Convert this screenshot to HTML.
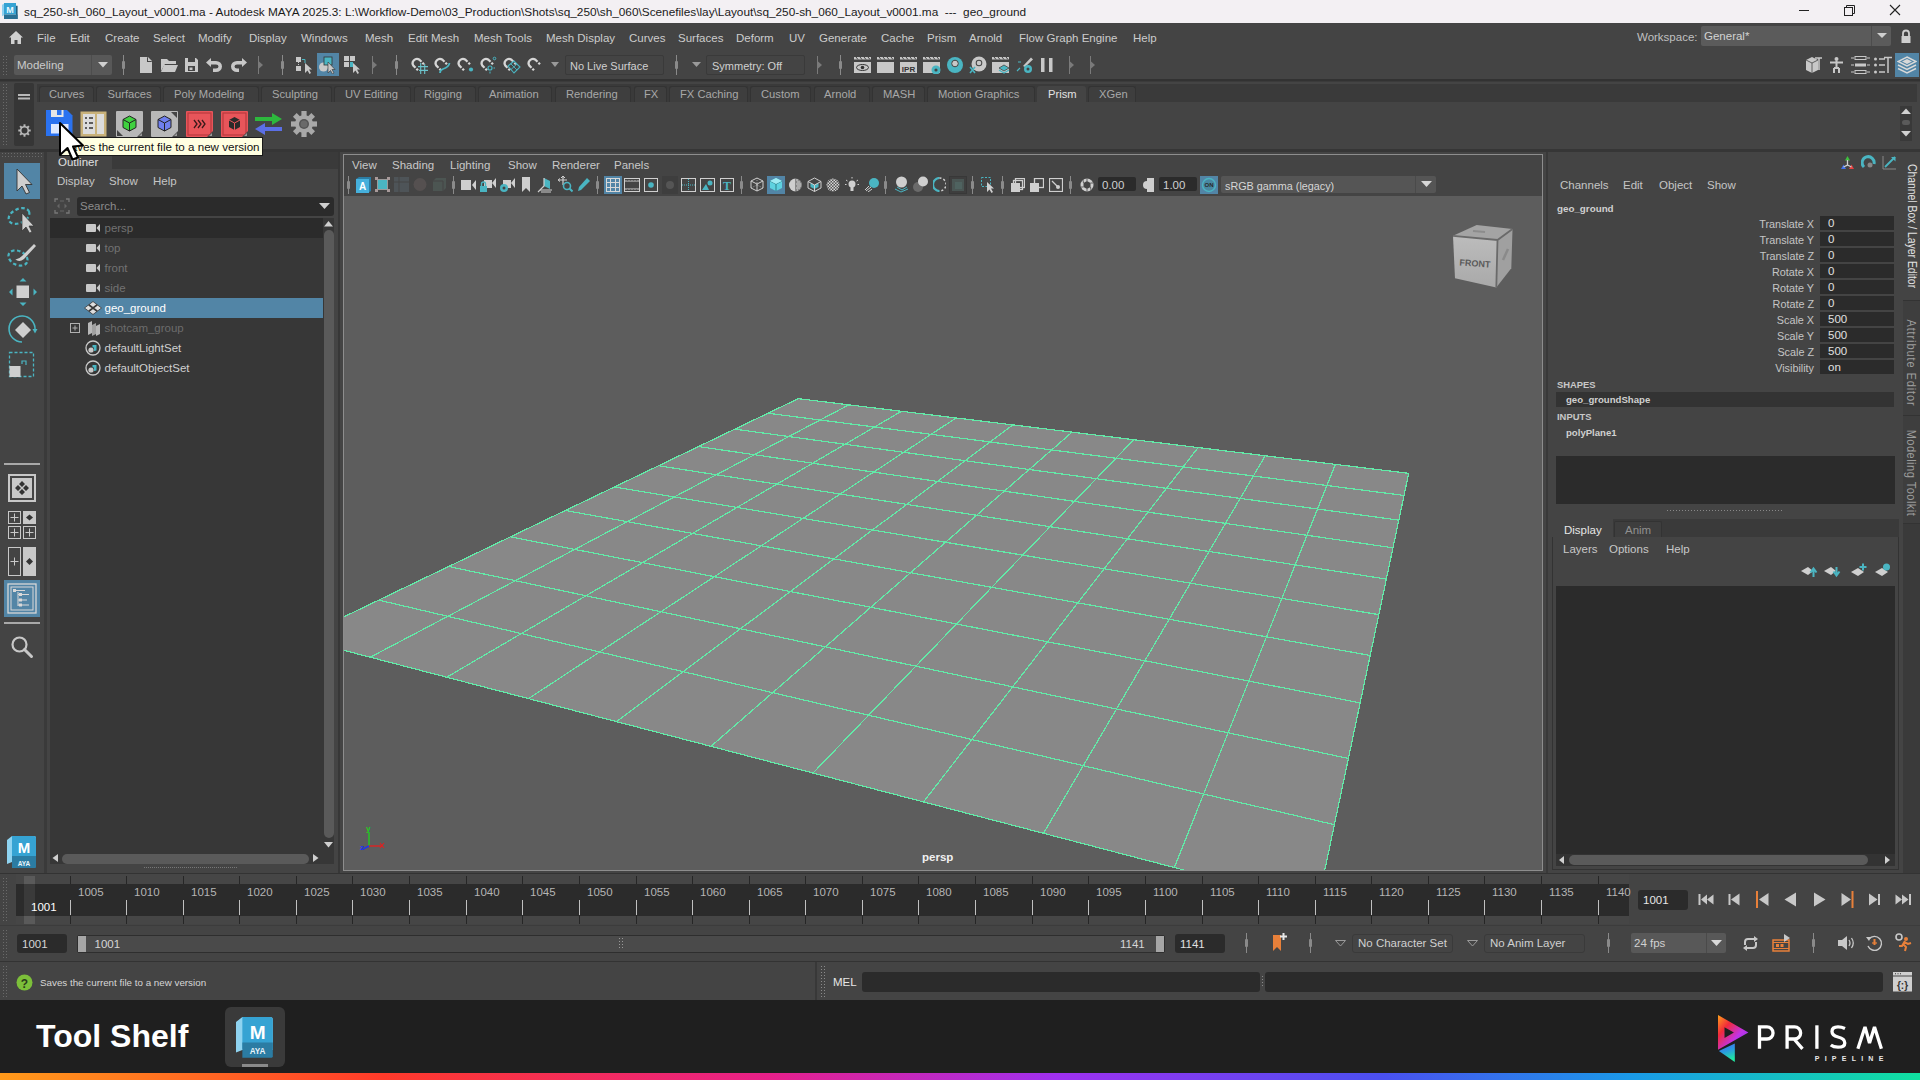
<!DOCTYPE html><html><head><meta charset="utf-8"><style>
html,body{margin:0;padding:0;width:1920px;height:1080px;overflow:hidden;background:#444;}
body{position:relative;font-family:"Liberation Sans",sans-serif;}
div{position:absolute;}
.t{white-space:nowrap;}
</style></head><body>
<div style="left:0px;top:0px;width:1920px;height:23px;background:#f3f0f3;"></div>
<svg style="position:absolute;left:2px;top:3px;" width="16" height="16" viewBox="0 0 16 16"><path d="M0 1.8 L2.5 0.5 V12 L0 13.2Z" fill="#8fd0ef"/><rect x="2" y="0" width="12" height="11.5" fill="#36a3d3"/><path d="M14 2.8 H15.6 V16 H14Z" fill="#1f5f80"/><rect x="2" y="11.5" width="13.6" height="4.5" fill="#2a6f93"/><text x="8" y="9.6" font-family="Liberation Sans" font-weight="700" font-size="9" fill="#e8f8ff" text-anchor="middle">M</text></svg>
<div class="t" style="left:24px;top:4.5px;line-height:15px;font-size:11.8px;color:#1a1a1a;font-weight:400;font-family:'Liberation Sans',sans-serif;">sq_250-sh_060_Layout_v0001.ma - Autodesk MAYA 2025.3: L:\Workflow-Demo\03_Production\Shots\sq_250\sh_060\Scenefiles\lay\Layout\sq_250-sh_060_Layout_v0001.ma  ---  geo_ground</div>
<svg style="position:absolute;left:1795px;top:3px;" width="120" height="16" viewBox="0 0 120 16"><line x1="4" y1="7.5" x2="14" y2="7.5" stroke="#222" stroke-width="1"/><rect x="49.5" y="4.5" width="8" height="8" fill="none" stroke="#222"/><path d="M51.5 4.5 V2.5 H59.5 V10.5 H57.5" fill="none" stroke="#222"/><path d="M95 2 L105 12 M105 2 L95 12" stroke="#222" stroke-width="1.1"/></svg>
<div style="left:0px;top:23px;width:1920px;height:29px;background:#444444;"></div>
<svg style="position:absolute;left:8px;top:30px;" width="16" height="15" viewBox="0 0 16 15"><path d="M8 1 L15 7.5 L13 7.5 L13 14 L9.5 14 L9.5 10 L6.5 10 L6.5 14 L3 14 L3 7.5 L1 7.5Z" fill="#d0d0d0"/></svg>
<div class="t" style="left:37px;top:30.5px;line-height:15px;font-size:11.5px;color:#cccccc;font-weight:400;font-family:'Liberation Sans',sans-serif;">File</div>
<div class="t" style="left:70px;top:30.5px;line-height:15px;font-size:11.5px;color:#cccccc;font-weight:400;font-family:'Liberation Sans',sans-serif;">Edit</div>
<div class="t" style="left:105px;top:30.5px;line-height:15px;font-size:11.5px;color:#cccccc;font-weight:400;font-family:'Liberation Sans',sans-serif;">Create</div>
<div class="t" style="left:153px;top:30.5px;line-height:15px;font-size:11.5px;color:#cccccc;font-weight:400;font-family:'Liberation Sans',sans-serif;">Select</div>
<div class="t" style="left:198px;top:30.5px;line-height:15px;font-size:11.5px;color:#cccccc;font-weight:400;font-family:'Liberation Sans',sans-serif;">Modify</div>
<div class="t" style="left:249px;top:30.5px;line-height:15px;font-size:11.5px;color:#cccccc;font-weight:400;font-family:'Liberation Sans',sans-serif;">Display</div>
<div class="t" style="left:301px;top:30.5px;line-height:15px;font-size:11.5px;color:#cccccc;font-weight:400;font-family:'Liberation Sans',sans-serif;">Windows</div>
<div class="t" style="left:365px;top:30.5px;line-height:15px;font-size:11.5px;color:#cccccc;font-weight:400;font-family:'Liberation Sans',sans-serif;">Mesh</div>
<div class="t" style="left:408px;top:30.5px;line-height:15px;font-size:11.5px;color:#cccccc;font-weight:400;font-family:'Liberation Sans',sans-serif;">Edit Mesh</div>
<div class="t" style="left:474px;top:30.5px;line-height:15px;font-size:11.5px;color:#cccccc;font-weight:400;font-family:'Liberation Sans',sans-serif;">Mesh Tools</div>
<div class="t" style="left:546px;top:30.5px;line-height:15px;font-size:11.5px;color:#cccccc;font-weight:400;font-family:'Liberation Sans',sans-serif;">Mesh Display</div>
<div class="t" style="left:629px;top:30.5px;line-height:15px;font-size:11.5px;color:#cccccc;font-weight:400;font-family:'Liberation Sans',sans-serif;">Curves</div>
<div class="t" style="left:678px;top:30.5px;line-height:15px;font-size:11.5px;color:#cccccc;font-weight:400;font-family:'Liberation Sans',sans-serif;">Surfaces</div>
<div class="t" style="left:736px;top:30.5px;line-height:15px;font-size:11.5px;color:#cccccc;font-weight:400;font-family:'Liberation Sans',sans-serif;">Deform</div>
<div class="t" style="left:789px;top:30.5px;line-height:15px;font-size:11.5px;color:#cccccc;font-weight:400;font-family:'Liberation Sans',sans-serif;">UV</div>
<div class="t" style="left:819px;top:30.5px;line-height:15px;font-size:11.5px;color:#cccccc;font-weight:400;font-family:'Liberation Sans',sans-serif;">Generate</div>
<div class="t" style="left:881px;top:30.5px;line-height:15px;font-size:11.5px;color:#cccccc;font-weight:400;font-family:'Liberation Sans',sans-serif;">Cache</div>
<div class="t" style="left:927px;top:30.5px;line-height:15px;font-size:11.5px;color:#cccccc;font-weight:400;font-family:'Liberation Sans',sans-serif;">Prism</div>
<div class="t" style="left:969px;top:30.5px;line-height:15px;font-size:11.5px;color:#cccccc;font-weight:400;font-family:'Liberation Sans',sans-serif;">Arnold</div>
<div class="t" style="left:1019px;top:30.5px;line-height:15px;font-size:11.5px;color:#cccccc;font-weight:400;font-family:'Liberation Sans',sans-serif;">Flow Graph Engine</div>
<div class="t" style="left:1133px;top:30.5px;line-height:15px;font-size:11.5px;color:#cccccc;font-weight:400;font-family:'Liberation Sans',sans-serif;">Help</div>
<div class="t" style="left:1637px;top:29.5px;line-height:15px;font-size:11.5px;color:#c0c0c0;font-weight:400;font-family:'Liberation Sans',sans-serif;">Workspace:</div>
<div style="left:1701px;top:26px;width:190px;height:20px;background:#5b5b5b;border-radius:2px"></div>
<div style="left:1871px;top:26px;width:1px;height:20px;background:#4c4c4c;"></div>
<svg style="position:absolute;left:1876px;top:32px;" width="12" height="8" viewBox="0 0 12 8"><path d="M1 1 L11 1 L6 6Z" fill="#cfcfcf"/></svg>
<div class="t" style="left:1704px;top:29.0px;line-height:15px;font-size:11.5px;color:#d2d2d2;font-weight:400;font-family:'Liberation Sans',sans-serif;">General*</div>
<svg style="position:absolute;left:1899px;top:28px;" width="14" height="16" viewBox="0 0 14 16"><path d="M4 8 V5.5 A3 3 0 0 1 10 5.5 V8" fill="none" stroke="#cfcfcf" stroke-width="1.8"/><rect x="2.5" y="8" width="9" height="7" fill="#cfcfcf"/></svg>
<div style="left:0px;top:52px;width:1920px;height:28px;background:#444444;"></div>
<div style="left:0px;top:79px;width:1920px;height:2px;background:#323232;"></div>
<div style="left:0px;top:81px;width:1920px;height:1px;background:#3b3b3b;"></div>
<svg style="position:absolute;left:3px;top:56px;" width="5" height="20" viewBox="0 0 5 20"><rect x="0" y="0" width="1" height="1" fill="#6a6a6a"/><rect x="0" y="3" width="1" height="1" fill="#6a6a6a"/><rect x="0" y="6" width="1" height="1" fill="#6a6a6a"/><rect x="0" y="9" width="1" height="1" fill="#6a6a6a"/><rect x="0" y="12" width="1" height="1" fill="#6a6a6a"/><rect x="0" y="15" width="1" height="1" fill="#6a6a6a"/><rect x="0" y="18" width="1" height="1" fill="#6a6a6a"/><rect x="3" y="0" width="1" height="1" fill="#6a6a6a"/><rect x="3" y="3" width="1" height="1" fill="#6a6a6a"/><rect x="3" y="6" width="1" height="1" fill="#6a6a6a"/><rect x="3" y="9" width="1" height="1" fill="#6a6a6a"/><rect x="3" y="12" width="1" height="1" fill="#6a6a6a"/><rect x="3" y="15" width="1" height="1" fill="#6a6a6a"/><rect x="3" y="18" width="1" height="1" fill="#6a6a6a"/></svg>
<div style="left:14px;top:55px;width:98px;height:20px;background:#585858;border-radius:2px"></div>
<div style="left:91px;top:55px;width:1px;height:20px;background:#4d4d4d;"></div>
<div class="t" style="left:17px;top:58.0px;line-height:15px;font-size:11.5px;color:#cbcbcb;font-weight:400;font-family:'Liberation Sans',sans-serif;">Modeling</div>
<svg style="position:absolute;left:97px;top:61px;" width="12" height="8" viewBox="0 0 12 8"><path d="M1 1 L11 1 L6 6.5Z" fill="#d0d0d0"/></svg>
<svg style="position:absolute;left:121px;top:55px;" width="5" height="20" viewBox="0 0 5 20"><rect x="2" y="0" width="1" height="20" fill="#8a8a8a"/><rect x="1" y="6.0" width="3" height="8.0" fill="#8a8a8a" rx="1"/></svg>
<svg style="position:absolute;left:139px;top:57px;" width="14" height="16" viewBox="0 0 14 16"><path d="M1 0 H8 L13 5 V16 H1Z" fill="#c8c8c8"/><path d="M8 0 V5 H13" fill="#444"/><path d="M9 0 L13 4 H9Z" fill="#c8c8c8"/></svg>
<svg style="position:absolute;left:160px;top:57px;" width="19" height="16" viewBox="0 0 19 16"><path d="M1 2 H7 L9 4 H16 V7 H5 L1 14Z" fill="#c8c8c8"/><path d="M4 8 H18 L15 15 H1Z" fill="#c8c8c8"/></svg>
<svg style="position:absolute;left:184px;top:57px;" width="15" height="16" viewBox="0 0 15 16"><path d="M1 1 H12 L14 3 V15 H1Z" fill="#c8c8c8"/><rect x="4" y="1" width="7" height="4" fill="#444"/><rect x="4" y="9" width="7" height="5" fill="#444"/><rect x="5.5" y="10.5" width="3" height="2.5" fill="#c8c8c8"/></svg>
<svg style="position:absolute;left:205px;top:57px;" width="19" height="16" viewBox="0 0 19 16"><path d="M1 5.5 L6 1 V4 H11 A6 5.5 0 0 1 11 15 H8 V11.5 H11 A2.5 2 0 0 0 11 7.5 H6 V10Z" fill="#c8c8c8"/></svg>
<svg style="position:absolute;left:229px;top:57px;" width="19" height="16" viewBox="0 0 19 16"><path d="M18 5.5 L13 1 V4 H8 A6 5.5 0 0 0 8 15 H10 V11.5 H8 A2.5 2 0 0 1 8 7.5 H13 V10Z" fill="#c8c8c8"/></svg>
<svg style="position:absolute;left:258px;top:56px;" width="6" height="18" viewBox="0 0 6 18"><rect x="0" y="0" width="1" height="18" fill="#7a7a7a"/><path d="M0.5 5.0 L5 9.0 L0.5 13.0Z" fill="#7a7a7a"/></svg>
<svg style="position:absolute;left:280px;top:55px;" width="5" height="20" viewBox="0 0 5 20"><rect x="2" y="0" width="1" height="20" fill="#8a8a8a"/><rect x="1" y="6.0" width="3" height="8.0" fill="#8a8a8a" rx="1"/></svg>
<svg style="position:absolute;left:296px;top:56px;" width="17" height="18" viewBox="0 0 17 18"><rect x="0" y="1" width="5" height="5" fill="#c8c8c8"/><rect x="0" y="10" width="5" height="5" fill="#c8c8c8"/><path d="M2.5 6 V10" stroke="#c8c8c8" stroke-dasharray="1 1"/><path d="M6 3.5 H9 V7" fill="none" stroke="#4ab5c2" stroke-width="1"/><path d="M9 7 L9 17 L11.5 14.5 L13.5 18 L15 17 L13 13.5 L16 13.5Z" fill="#c8c8c8"/></svg>
<div style="left:317px;top:53px;width:22px;height:23px;background:#5285a6;"></div>
<svg style="position:absolute;left:318px;top:56px;" width="20" height="18" viewBox="0 0 20 18"><circle cx="5.5" cy="11" r="4.5" fill="#c8c8c8"/><rect x="6" y="1" width="8" height="8" fill="#4ab5c2" stroke="#333" stroke-width="0.8"/><path d="M10 6 L10 17 L12.5 14.5 L14.5 18 L16 17 L14 13.5 L17 13.5Z" fill="#c8c8c8" stroke="#333" stroke-width="0.6"/></svg>
<svg style="position:absolute;left:344px;top:56px;" width="17" height="18" viewBox="0 0 17 18"><rect x="0" y="0" width="5" height="5" fill="#c8c8c8"/><rect x="6" y="0" width="5" height="5" fill="#c8c8c8"/><rect x="0" y="6" width="5" height="5" fill="#c8c8c8"/><rect x="6" y="6" width="3" height="5" fill="#4ab5c2"/><path d="M9 7 L9 17 L11.5 14.5 L13.5 18 L15 17 L13 13.5 L16 13.5Z" fill="#c8c8c8"/></svg>
<svg style="position:absolute;left:372px;top:56px;" width="6" height="18" viewBox="0 0 6 18"><rect x="0" y="0" width="1" height="18" fill="#7a7a7a"/><path d="M0.5 5.0 L5 9.0 L0.5 13.0Z" fill="#7a7a7a"/></svg>
<svg style="position:absolute;left:394px;top:55px;" width="5" height="20" viewBox="0 0 5 20"><rect x="2" y="0" width="1" height="20" fill="#8a8a8a"/><rect x="1" y="6.0" width="3" height="8.0" fill="#8a8a8a" rx="1"/></svg>
<svg style="position:absolute;left:410px;top:56px;" width="20" height="18" viewBox="0 0 20 18"><path d="M5.5 11.8 L3.5 9.8 A4.3 4.3 0 0 1 9.5 3.8 L11.5 5.8" fill="none" stroke="#d6d6d6" stroke-width="2.3"/><path d="M7.2 11.9 L8.8 13.5 L7.2 15.1 L5.6 13.5Z M13.2 5.9 L14.8 7.5 L13.2 9.1 L11.6 7.5Z" fill="#d6d6d6"/><path d="M8 10.6 H18 M9 14.4 H18 M10.7 7 V18 M14.7 8 V18" stroke="#6cc4cc" stroke-width="1.1"/></svg>
<svg style="position:absolute;left:433px;top:56px;" width="20" height="18" viewBox="0 0 20 18"><path d="M5.5 11.8 L3.5 9.8 A4.3 4.3 0 0 1 9.5 3.8 L11.5 5.8" fill="none" stroke="#d6d6d6" stroke-width="2.3"/><path d="M7.2 11.9 L8.8 13.5 L7.2 15.1 L5.6 13.5Z M13.2 5.9 L14.8 7.5 L13.2 9.1 L11.6 7.5Z" fill="#d6d6d6"/><path d="M7 17 Q7 14 10 13 Q16 11 16.5 7" fill="none" stroke="#4ab5c2" stroke-width="1.8"/></svg>
<svg style="position:absolute;left:456px;top:56px;" width="20" height="18" viewBox="0 0 20 18"><path d="M5.5 11.8 L3.5 9.8 A4.3 4.3 0 0 1 9.5 3.8 L11.5 5.8" fill="none" stroke="#d6d6d6" stroke-width="2.3"/><path d="M7.2 11.9 L8.8 13.5 L7.2 15.1 L5.6 13.5Z M13.2 5.9 L14.8 7.5 L13.2 9.1 L11.6 7.5Z" fill="#d6d6d6"/><circle cx="15" cy="13.5" r="2.1" fill="#4ab5c2"/></svg>
<svg style="position:absolute;left:479px;top:56px;" width="20" height="18" viewBox="0 0 20 18"><path d="M5.5 11.8 L3.5 9.8 A4.3 4.3 0 0 1 9.5 3.8 L11.5 5.8" fill="none" stroke="#d6d6d6" stroke-width="2.3"/><path d="M7.2 11.9 L8.8 13.5 L7.2 15.1 L5.6 13.5Z M13.2 5.9 L14.8 7.5 L13.2 9.1 L11.6 7.5Z" fill="#d6d6d6"/><circle cx="11" cy="12" r="2" fill="none" stroke="#4ab5c2" stroke-width="1.2"/><circle cx="15.5" cy="2.5" r="1.3" fill="none" stroke="#4ab5c2"/><path d="M11 15.5 V17.5 M14.5 12 H16" stroke="#4ab5c2"/></svg>
<svg style="position:absolute;left:502px;top:56px;" width="20" height="18" viewBox="0 0 20 18"><path d="M5.5 11.8 L3.5 9.8 A4.3 4.3 0 0 1 9.5 3.8 L11.5 5.8" fill="none" stroke="#d6d6d6" stroke-width="2.3"/><path d="M7.2 11.9 L8.8 13.5 L7.2 15.1 L5.6 13.5Z M13.2 5.9 L14.8 7.5 L13.2 9.1 L11.6 7.5Z" fill="#d6d6d6"/><path d="M6 10 L12 5 L18 11 L12 17Z" fill="none" stroke="#4ab5c2" stroke-width="1.1"/><path d="M9 8 L15 14 M9 13.5 L15 8" stroke="#4ab5c2" stroke-width="0.9"/></svg>
<svg style="position:absolute;left:526px;top:56px;" width="20" height="18" viewBox="0 0 20 18"><path d="M5.5 11.8 L3.5 9.8 A4.3 4.3 0 0 1 9.5 3.8 L11.5 5.8" fill="none" stroke="#d6d6d6" stroke-width="2.3"/><path d="M7.2 11.9 L8.8 13.5 L7.2 15.1 L5.6 13.5Z M13.2 5.9 L14.8 7.5 L13.2 9.1 L11.6 7.5Z" fill="#d6d6d6"/></svg>
<svg style="position:absolute;left:551px;top:62px;" width="8" height="6" viewBox="0 0 8 6"><path d="M0 0 H8 L4 5Z" fill="#9a9a9a"/></svg>
<div style="left:565px;top:55px;width:99px;height:20px;background:#444;border:1px solid #3a3a3a;box-sizing:border-box;border-radius:2px"></div>
<div class="t" style="left:570px;top:58.5px;line-height:14px;font-size:11px;color:#d0d0d0;font-weight:400;font-family:'Liberation Sans',sans-serif;">No Live Surface</div>
<svg style="position:absolute;left:674px;top:55px;" width="5" height="20" viewBox="0 0 5 20"><rect x="2" y="0" width="1" height="20" fill="#8a8a8a"/><rect x="1" y="6.0" width="3" height="8.0" fill="#8a8a8a" rx="1"/></svg>
<svg style="position:absolute;left:692px;top:62px;" width="9" height="6" viewBox="0 0 9 6"><path d="M0 0 H9 L4.5 5Z" fill="#9a9a9a"/></svg>
<div style="left:706px;top:55px;width:99px;height:20px;background:#444;border:1px solid #3a3a3a;box-sizing:border-box;border-radius:2px"></div>
<div class="t" style="left:712px;top:58.5px;line-height:14px;font-size:11px;color:#d0d0d0;font-weight:400;font-family:'Liberation Sans',sans-serif;">Symmetry: Off</div>
<svg style="position:absolute;left:817px;top:56px;" width="6" height="18" viewBox="0 0 6 18"><rect x="0" y="0" width="1" height="18" fill="#7a7a7a"/><path d="M0.5 5.0 L5 9.0 L0.5 13.0Z" fill="#7a7a7a"/></svg>
<svg style="position:absolute;left:838px;top:55px;" width="5" height="20" viewBox="0 0 5 20"><rect x="2" y="0" width="1" height="20" fill="#8a8a8a"/><rect x="1" y="6.0" width="3" height="8.0" fill="#8a8a8a" rx="1"/></svg>
<svg style="position:absolute;left:854px;top:56px;" width="18" height="18" viewBox="0 0 18 18"><path d="M0 1 H17 V3.5 H0Z" fill="#c8c8c8"/><path d="M2 1 L4 3.5 M6 1 L8 3.5 M10 1 L12 3.5 M14 1 L16 3.5" stroke="#444" stroke-width="1"/><rect x="0" y="6" width="17" height="11" fill="#c8c8c8"/><ellipse cx="8.5" cy="11.5" rx="6" ry="3" fill="none" stroke="#333" stroke-width="1"/><circle cx="8.5" cy="11.5" r="1.8" fill="#333"/></svg>
<svg style="position:absolute;left:877px;top:56px;" width="18" height="18" viewBox="0 0 18 18"><path d="M0 1 H17 V3.5 H0Z" fill="#c8c8c8"/><path d="M2 1 L4 3.5 M6 1 L8 3.5 M10 1 L12 3.5 M14 1 L16 3.5" stroke="#444" stroke-width="1"/><rect x="0" y="6" width="17" height="11" fill="#c8c8c8"/></svg>
<svg style="position:absolute;left:900px;top:56px;" width="18" height="18" viewBox="0 0 18 18"><path d="M0 1 H17 V3.5 H0Z" fill="#c8c8c8"/><path d="M2 1 L4 3.5 M6 1 L8 3.5 M10 1 L12 3.5 M14 1 L16 3.5" stroke="#444" stroke-width="1"/><rect x="0" y="6" width="17" height="11" fill="#c8c8c8"/><text x="8.5" y="15.5" font-family="Liberation Sans" font-size="8" font-weight="700" fill="#333" text-anchor="middle">IPR</text></svg>
<svg style="position:absolute;left:923px;top:56px;" width="18" height="18" viewBox="0 0 18 18"><path d="M0 1 H17 V3.5 H0Z" fill="#c8c8c8"/><path d="M2 1 L4 3.5 M6 1 L8 3.5 M10 1 L12 3.5 M14 1 L16 3.5" stroke="#444" stroke-width="1"/><rect x="0" y="6" width="17" height="11" fill="#c8c8c8"/><circle cx="13" cy="14" r="4.5" fill="#4ab5c2"/><circle cx="13" cy="14" r="1.6" fill="#444"/></svg>
<svg style="position:absolute;left:946px;top:56px;" width="18" height="18" viewBox="0 0 18 18"><circle cx="9" cy="9" r="8" fill="#4ab5c2"/><circle cx="9" cy="7.5" r="3.3" fill="#c8c8c8" stroke="#444" stroke-width="1"/></svg>
<svg style="position:absolute;left:969px;top:56px;" width="18" height="18" viewBox="0 0 18 18"><circle cx="10" cy="8" r="7.5" fill="#c8c8c8"/><circle cx="10" cy="7" r="3.3" fill="#444"/><circle cx="10" cy="7" r="2.3" fill="#c8c8c8"/><path d="M1 11 L6 17 M6 11 L1 17" stroke="#4ab5c2" stroke-width="1.6"/></svg>
<svg style="position:absolute;left:992px;top:56px;" width="18" height="18" viewBox="0 0 18 18"><path d="M0 1 H17 V3.5 H0Z" fill="#c8c8c8"/><path d="M2 1 L4 3.5 M6 1 L8 3.5 M10 1 L12 3.5 M14 1 L16 3.5" stroke="#444" stroke-width="1"/><rect x="0" y="6" width="17" height="11" fill="#c8c8c8"/><path d="M12 9 L17 12 L12 15 L7 12Z" fill="#4ab5c2" stroke="#444" stroke-width="0.8"/><path d="M7 14 L12 17 L17 14" fill="none" stroke="#4ab5c2" stroke-width="1.4"/></svg>
<svg style="position:absolute;left:1015px;top:56px;" width="20" height="18" viewBox="0 0 20 18"><path d="M8 10 L16 1.5 L18 3.5 L10 11Z" fill="#c8c8c8"/><path d="M3 6 H6 M2 15 L5 12" stroke="#4ab5c2" stroke-width="1.2"/><circle cx="13" cy="13" r="4" fill="#4ab5c2"/><circle cx="13" cy="13" r="1.5" fill="#444"/></svg>
<svg style="position:absolute;left:1041px;top:58px;" width="12" height="14" viewBox="0 0 12 14"><rect x="0" y="0" width="3.5" height="14" fill="#c8c8c8"/><rect x="8" y="0" width="3.5" height="14" fill="#c8c8c8"/></svg>
<svg style="position:absolute;left:1069px;top:56px;" width="6" height="18" viewBox="0 0 6 18"><rect x="0" y="0" width="1" height="18" fill="#7a7a7a"/><path d="M0.5 5.0 L5 9.0 L0.5 13.0Z" fill="#7a7a7a"/></svg>
<svg style="position:absolute;left:1090px;top:56px;" width="6" height="18" viewBox="0 0 6 18"><rect x="0" y="0" width="1" height="18" fill="#7a7a7a"/><path d="M0.5 5.0 L5 9.0 L0.5 13.0Z" fill="#7a7a7a"/></svg>
<svg style="position:absolute;left:1804px;top:56px;" width="19" height="18" viewBox="0 0 19 18"><path d="M2 4 L8 1 L14 4 V14 L8 17 L2 14Z" fill="#c8c8c8"/><path d="M8 7 V17 M2 4 L8 7 L14 4" stroke="#444" stroke-width="0.8" fill="none"/><path d="M11 2 H18 M15 2 V14" stroke="#c8c8c8" stroke-width="1.6"/></svg>
<svg style="position:absolute;left:1827px;top:56px;" width="19" height="18" viewBox="0 0 19 18"><circle cx="9.5" cy="3" r="2" fill="#c8c8c8"/><path d="M3 6.5 H16 M9.5 5 V12 M7 12 V17 M12 12 V17 M7 12 H12" stroke="#c8c8c8" stroke-width="2"/></svg>
<svg style="position:absolute;left:1851px;top:56px;" width="19" height="18" viewBox="0 0 19 18"><path d="M0 2 H3 M0 9 H3 M0 16 H3 M16 2 H19 M16 9 H19 M16 16 H19" stroke="#c8c8c8" stroke-width="1.2"/><rect x="4" y="0.5" width="11" height="3" fill="none" stroke="#c8c8c8"/><rect x="4" y="7.5" width="11" height="3" fill="#c8c8c8"/><rect x="4" y="14.5" width="11" height="3" fill="none" stroke="#c8c8c8"/></svg>
<svg style="position:absolute;left:1874px;top:56px;" width="19" height="18" viewBox="0 0 19 18"><circle cx="1.5" cy="3" r="1.5" fill="#c8c8c8"/><circle cx="1.5" cy="9" r="1.5" fill="#c8c8c8"/><circle cx="1.5" cy="16" r="1.5" fill="#c8c8c8"/><path d="M5 3 H11 M5 9 H11 M5 16 H11 M10 1.5 H18 M14 1.5 V17" stroke="#c8c8c8" stroke-width="1.5"/></svg>
<div style="left:1895px;top:53px;width:24px;height:24px;background:#5285a6;"></div>
<svg style="position:absolute;left:1897px;top:56px;" width="20" height="19" viewBox="0 0 20 19"><path d="M10 1 L19 5.5 L10 10 L1 5.5Z" fill="none" stroke="#d8d8d8" stroke-width="1.4"/><path d="M1 9 L10 13.5 L19 9 M1 12.5 L10 17 L19 12.5" fill="none" stroke="#d8d8d8" stroke-width="1.4"/><path d="M5 5.5 L10 3 L15 5.5 L10 8Z" fill="#d8d8d8"/></svg>
<div style="left:0px;top:82px;width:1920px;height:66px;background:#444444;"></div>
<svg style="position:absolute;left:3px;top:84px;" width="5" height="62" viewBox="0 0 5 62"><rect x="0" y="0" width="1" height="1" fill="#6a6a6a"/><rect x="0" y="3" width="1" height="1" fill="#6a6a6a"/><rect x="0" y="6" width="1" height="1" fill="#6a6a6a"/><rect x="0" y="9" width="1" height="1" fill="#6a6a6a"/><rect x="0" y="12" width="1" height="1" fill="#6a6a6a"/><rect x="0" y="15" width="1" height="1" fill="#6a6a6a"/><rect x="0" y="18" width="1" height="1" fill="#6a6a6a"/><rect x="0" y="21" width="1" height="1" fill="#6a6a6a"/><rect x="0" y="24" width="1" height="1" fill="#6a6a6a"/><rect x="0" y="27" width="1" height="1" fill="#6a6a6a"/><rect x="0" y="30" width="1" height="1" fill="#6a6a6a"/><rect x="0" y="33" width="1" height="1" fill="#6a6a6a"/><rect x="0" y="36" width="1" height="1" fill="#6a6a6a"/><rect x="0" y="39" width="1" height="1" fill="#6a6a6a"/><rect x="0" y="42" width="1" height="1" fill="#6a6a6a"/><rect x="0" y="45" width="1" height="1" fill="#6a6a6a"/><rect x="0" y="48" width="1" height="1" fill="#6a6a6a"/><rect x="0" y="51" width="1" height="1" fill="#6a6a6a"/><rect x="0" y="54" width="1" height="1" fill="#6a6a6a"/><rect x="0" y="57" width="1" height="1" fill="#6a6a6a"/><rect x="0" y="60" width="1" height="1" fill="#6a6a6a"/><rect x="3" y="0" width="1" height="1" fill="#6a6a6a"/><rect x="3" y="3" width="1" height="1" fill="#6a6a6a"/><rect x="3" y="6" width="1" height="1" fill="#6a6a6a"/><rect x="3" y="9" width="1" height="1" fill="#6a6a6a"/><rect x="3" y="12" width="1" height="1" fill="#6a6a6a"/><rect x="3" y="15" width="1" height="1" fill="#6a6a6a"/><rect x="3" y="18" width="1" height="1" fill="#6a6a6a"/><rect x="3" y="21" width="1" height="1" fill="#6a6a6a"/><rect x="3" y="24" width="1" height="1" fill="#6a6a6a"/><rect x="3" y="27" width="1" height="1" fill="#6a6a6a"/><rect x="3" y="30" width="1" height="1" fill="#6a6a6a"/><rect x="3" y="33" width="1" height="1" fill="#6a6a6a"/><rect x="3" y="36" width="1" height="1" fill="#6a6a6a"/><rect x="3" y="39" width="1" height="1" fill="#6a6a6a"/><rect x="3" y="42" width="1" height="1" fill="#6a6a6a"/><rect x="3" y="45" width="1" height="1" fill="#6a6a6a"/><rect x="3" y="48" width="1" height="1" fill="#6a6a6a"/><rect x="3" y="51" width="1" height="1" fill="#6a6a6a"/><rect x="3" y="54" width="1" height="1" fill="#6a6a6a"/><rect x="3" y="57" width="1" height="1" fill="#6a6a6a"/><rect x="3" y="60" width="1" height="1" fill="#6a6a6a"/></svg>
<div style="left:14px;top:83px;width:20px;height:63px;background:#363636;border-radius:2px"></div>
<svg style="position:absolute;left:17px;top:93px;" width="14" height="8" viewBox="0 0 14 8"><rect x="1" y="1" width="12" height="2" fill="#b8b8b8"/><rect x="1" y="4.5" width="12" height="2" fill="#b8b8b8"/></svg>
<svg style="position:absolute;left:18px;top:124px;" width="13" height="13" viewBox="0 0 13 13"><g transform="translate(6.5 6.5)"><circle r="3.8" fill="none" stroke="#b8b8b8" stroke-width="1.6"/><rect x="-1" y="-6.2" width="2" height="2.6" fill="#b8b8b8" transform="rotate(0)"/><rect x="-1" y="-6.2" width="2" height="2.6" fill="#b8b8b8" transform="rotate(45)"/><rect x="-1" y="-6.2" width="2" height="2.6" fill="#b8b8b8" transform="rotate(90)"/><rect x="-1" y="-6.2" width="2" height="2.6" fill="#b8b8b8" transform="rotate(135)"/><rect x="-1" y="-6.2" width="2" height="2.6" fill="#b8b8b8" transform="rotate(180)"/><rect x="-1" y="-6.2" width="2" height="2.6" fill="#b8b8b8" transform="rotate(225)"/><rect x="-1" y="-6.2" width="2" height="2.6" fill="#b8b8b8" transform="rotate(270)"/><rect x="-1" y="-6.2" width="2" height="2.6" fill="#b8b8b8" transform="rotate(315)"/></g></svg>
<div style="left:37px;top:84px;width:1880px;height:18px;background:#3a3a3a;"></div>
<div style="left:39px;top:86px;width:55px;height:16px;background:#3e3e3e;border:1px solid #333;border-bottom:none;box-sizing:border-box;border-radius:3px 3px 0 0"></div>
<div class="t" style="left:49px;top:87.3px;line-height:15px;font-size:11.2px;color:#a8a8a8;font-weight:400;font-family:'Liberation Sans',sans-serif;">Curves</div>
<div style="left:96px;top:86px;width:65px;height:16px;background:#3e3e3e;border:1px solid #333;border-bottom:none;box-sizing:border-box;border-radius:3px 3px 0 0"></div>
<div class="t" style="left:107.5px;top:87.3px;line-height:15px;font-size:11.2px;color:#a8a8a8;font-weight:400;font-family:'Liberation Sans',sans-serif;">Surfaces</div>
<div style="left:163px;top:86px;width:96px;height:16px;background:#3e3e3e;border:1px solid #333;border-bottom:none;box-sizing:border-box;border-radius:3px 3px 0 0"></div>
<div class="t" style="left:174px;top:87.3px;line-height:15px;font-size:11.2px;color:#a8a8a8;font-weight:400;font-family:'Liberation Sans',sans-serif;">Poly Modeling</div>
<div style="left:261px;top:86px;width:71px;height:16px;background:#3e3e3e;border:1px solid #333;border-bottom:none;box-sizing:border-box;border-radius:3px 3px 0 0"></div>
<div class="t" style="left:272px;top:87.3px;line-height:15px;font-size:11.2px;color:#a8a8a8;font-weight:400;font-family:'Liberation Sans',sans-serif;">Sculpting</div>
<div style="left:334px;top:86px;width:77px;height:16px;background:#3e3e3e;border:1px solid #333;border-bottom:none;box-sizing:border-box;border-radius:3px 3px 0 0"></div>
<div class="t" style="left:345px;top:87.3px;line-height:15px;font-size:11.2px;color:#a8a8a8;font-weight:400;font-family:'Liberation Sans',sans-serif;">UV Editing</div>
<div style="left:414px;top:86px;width:62px;height:16px;background:#3e3e3e;border:1px solid #333;border-bottom:none;box-sizing:border-box;border-radius:3px 3px 0 0"></div>
<div class="t" style="left:424px;top:87.3px;line-height:15px;font-size:11.2px;color:#a8a8a8;font-weight:400;font-family:'Liberation Sans',sans-serif;">Rigging</div>
<div style="left:478px;top:86px;width:74px;height:16px;background:#3e3e3e;border:1px solid #333;border-bottom:none;box-sizing:border-box;border-radius:3px 3px 0 0"></div>
<div class="t" style="left:489px;top:87.3px;line-height:15px;font-size:11.2px;color:#a8a8a8;font-weight:400;font-family:'Liberation Sans',sans-serif;">Animation</div>
<div style="left:555px;top:86px;width:76px;height:16px;background:#3e3e3e;border:1px solid #333;border-bottom:none;box-sizing:border-box;border-radius:3px 3px 0 0"></div>
<div class="t" style="left:566px;top:87.3px;line-height:15px;font-size:11.2px;color:#a8a8a8;font-weight:400;font-family:'Liberation Sans',sans-serif;">Rendering</div>
<div style="left:634px;top:86px;width:33px;height:16px;background:#3e3e3e;border:1px solid #333;border-bottom:none;box-sizing:border-box;border-radius:3px 3px 0 0"></div>
<div class="t" style="left:644px;top:87.3px;line-height:15px;font-size:11.2px;color:#a8a8a8;font-weight:400;font-family:'Liberation Sans',sans-serif;">FX</div>
<div style="left:669px;top:86px;width:79px;height:16px;background:#3e3e3e;border:1px solid #333;border-bottom:none;box-sizing:border-box;border-radius:3px 3px 0 0"></div>
<div class="t" style="left:680px;top:87.3px;line-height:15px;font-size:11.2px;color:#a8a8a8;font-weight:400;font-family:'Liberation Sans',sans-serif;">FX Caching</div>
<div style="left:750px;top:86px;width:61px;height:16px;background:#3e3e3e;border:1px solid #333;border-bottom:none;box-sizing:border-box;border-radius:3px 3px 0 0"></div>
<div class="t" style="left:761px;top:87.3px;line-height:15px;font-size:11.2px;color:#a8a8a8;font-weight:400;font-family:'Liberation Sans',sans-serif;">Custom</div>
<div style="left:814px;top:86px;width:56px;height:16px;background:#3e3e3e;border:1px solid #333;border-bottom:none;box-sizing:border-box;border-radius:3px 3px 0 0"></div>
<div class="t" style="left:824px;top:87.3px;line-height:15px;font-size:11.2px;color:#a8a8a8;font-weight:400;font-family:'Liberation Sans',sans-serif;">Arnold</div>
<div style="left:872px;top:86px;width:53px;height:16px;background:#3e3e3e;border:1px solid #333;border-bottom:none;box-sizing:border-box;border-radius:3px 3px 0 0"></div>
<div class="t" style="left:883px;top:87.3px;line-height:15px;font-size:11.2px;color:#a8a8a8;font-weight:400;font-family:'Liberation Sans',sans-serif;">MASH</div>
<div style="left:927px;top:86px;width:108px;height:16px;background:#3e3e3e;border:1px solid #333;border-bottom:none;box-sizing:border-box;border-radius:3px 3px 0 0"></div>
<div class="t" style="left:938px;top:87.3px;line-height:15px;font-size:11.2px;color:#a8a8a8;font-weight:400;font-family:'Liberation Sans',sans-serif;">Motion Graphics</div>
<div style="left:1037px;top:86px;width:49px;height:16px;background:#444;border-radius:3px 3px 0 0"></div>
<div class="t" style="left:1048px;top:87.3px;line-height:15px;font-size:11.2px;color:#e2e2e2;font-weight:400;font-family:'Liberation Sans',sans-serif;">Prism</div>
<div style="left:1088px;top:86px;width:48px;height:16px;background:#3e3e3e;border:1px solid #333;border-bottom:none;box-sizing:border-box;border-radius:3px 3px 0 0"></div>
<div class="t" style="left:1099px;top:87.3px;line-height:15px;font-size:11.2px;color:#a8a8a8;font-weight:400;font-family:'Liberation Sans',sans-serif;">XGen</div>
<div style="left:1900px;top:106px;width:12px;height:35px;background:#393939;"></div>
<svg style="position:absolute;left:1899px;top:107px;" width="14" height="32" viewBox="0 0 14 32"><path d="M2 7 L7 1.5 L12 7Z" fill="#cfcfcf"/><rect x="3" y="13" width="8" height="5" rx="2.5" fill="#5a5a5a"/><path d="M2 24 L7 29.5 L12 24Z" fill="#cfcfcf"/></svg>
<svg style="position:absolute;left:46px;top:110px;" width="27" height="27" viewBox="0 0 27 27"><path d="M0 0 H21 L26.5 5.5 V26 H0Z" fill="#2a72f0"/><rect x="5" y="0" width="12.5" height="7" fill="#e6e6e6"/><rect x="11" y="0" width="4.5" height="5" fill="#2a72f0"/><rect x="5" y="14" width="17.5" height="9.5" fill="#dde8ff"/></svg>
<svg style="position:absolute;left:80px;top:111px;" width="27" height="26" viewBox="0 0 27 26"><rect x="0.5" y="0.5" width="26" height="25" fill="#c9b27a"/><rect x="3" y="3" width="21" height="20" fill="#dcdcdc"/><rect x="15" y="3" width="2" height="20" fill="#c9b27a"/><path d="M5 7 H7 M9 7 H13 M5 12 H7 M9 12 H13 M5 17 H7 M9 17 H13" stroke="#333" stroke-width="1.5"/></svg>
<svg style="position:absolute;left:116px;top:111px;" width="27" height="26" viewBox="0 0 27 26"><rect x="0" y="0" width="27" height="26" rx="1" fill="#b8b8b8"/><path d="M13.5 5 L20 8.5 V16.5 L13.5 20 L7 16.5 V8.5Z" fill="#3fd13f" stroke="#222" stroke-width="1"/><path d="M7 8.5 L13.5 12 L20 8.5 M13.5 12 V20" fill="none" stroke="#222" stroke-width="1"/><path d="M1 19 L1 25 L7 25Z" fill="#444"/><path d="M27 20 L27 26 L21 26Z" fill="#444"/><path d="M26 22 L26 25 L23 25Z" fill="#9a9a9a"/></svg>
<svg style="position:absolute;left:151px;top:111px;" width="27" height="26" viewBox="0 0 27 26"><rect x="0" y="0" width="27" height="26" rx="1" fill="#b8b8b8"/><path d="M13.5 5 L20 8.5 V16.5 L13.5 20 L7 16.5 V8.5Z" fill="#6f7fee" stroke="#222" stroke-width="1"/><path d="M7 8.5 L13.5 12 L20 8.5 M13.5 12 V20" fill="none" stroke="#222" stroke-width="1"/><path d="M20 1 L26 1 L26 7Z" fill="#444"/><path d="M27 20 L27 26 L21 26Z" fill="#444"/><path d="M26 22 L26 25 L23 25Z" fill="#9a9a9a"/></svg>
<svg style="position:absolute;left:186px;top:111px;" width="27" height="26" viewBox="0 0 27 26"><rect x="0" y="0" width="27" height="26" rx="1" fill="#e8555a"/><rect x="2" y="2" width="23" height="22" fill="none" stroke="#b93a3e" stroke-width="1.2"/><path d="M8 9 L11 13 L8 17 M12 9 L15 13 L12 17 M16 9 L19 13 L16 17" fill="none" stroke="#3a1a1a" stroke-width="1.3"/><path d="M27 20 L27 26 L21 26Z" fill="#444"/><path d="M26 22 L26 25 L23 25Z" fill="#9a9a9a"/></svg>
<svg style="position:absolute;left:221px;top:111px;" width="27" height="26" viewBox="0 0 27 26"><rect x="0" y="0" width="27" height="26" rx="1" fill="#e8555a"/><rect x="2" y="2" width="23" height="22" fill="none" stroke="#b93a3e" stroke-width="1.2"/><path d="M13.5 6 L19 9 V16 L13.5 19 L8 16 V9Z" fill="#2a2a2a"/><path d="M8 9 L13.5 12 L19 9 M13.5 12 V19" fill="none" stroke="#e8555a" stroke-width="1"/><path d="M27 20 L27 26 L21 26Z" fill="#444"/><path d="M26 22 L26 25 L23 25Z" fill="#9a9a9a"/></svg>
<svg style="position:absolute;left:255px;top:113px;" width="27" height="22" viewBox="0 0 27 22"><path d="M0 4 H17 V0 L27 6 L17 12 V8 H0Z" fill="#2db83d"/><path d="M27 14 H10 V10 L0 16 L10 22 V18 H27Z" fill="#5b6fe6"/></svg>
<svg style="position:absolute;left:290px;top:110px;" width="28" height="28" viewBox="0 0 28 28"><g transform="translate(14 14)"><circle r="9" fill="#a8a8a8"/><rect x="-2.6" y="-13" width="5.2" height="6" fill="#a8a8a8" transform="rotate(0)"/><rect x="-2.6" y="-13" width="5.2" height="6" fill="#a8a8a8" transform="rotate(45)"/><rect x="-2.6" y="-13" width="5.2" height="6" fill="#a8a8a8" transform="rotate(90)"/><rect x="-2.6" y="-13" width="5.2" height="6" fill="#a8a8a8" transform="rotate(135)"/><rect x="-2.6" y="-13" width="5.2" height="6" fill="#a8a8a8" transform="rotate(180)"/><rect x="-2.6" y="-13" width="5.2" height="6" fill="#a8a8a8" transform="rotate(225)"/><rect x="-2.6" y="-13" width="5.2" height="6" fill="#a8a8a8" transform="rotate(270)"/><rect x="-2.6" y="-13" width="5.2" height="6" fill="#a8a8a8" transform="rotate(315)"/><circle r="5" fill="#555"/><circle r="3.5" fill="#6a6a6a"/></g></svg>
<div style="left:0px;top:149px;width:1920px;height:3px;background:#363636;"></div>
<div style="left:0px;top:152px;width:1920px;height:722px;background:#444444;"></div>
<svg style="position:absolute;left:2px;top:153px;" width="40" height="4" viewBox="0 0 40 4"><rect x="0" y="0" width="1" height="1" fill="#6a6a6a"/><rect x="0" y="3" width="1" height="1" fill="#6a6a6a"/><rect x="3" y="0" width="1" height="1" fill="#6a6a6a"/><rect x="3" y="3" width="1" height="1" fill="#6a6a6a"/><rect x="6" y="0" width="1" height="1" fill="#6a6a6a"/><rect x="6" y="3" width="1" height="1" fill="#6a6a6a"/><rect x="9" y="0" width="1" height="1" fill="#6a6a6a"/><rect x="9" y="3" width="1" height="1" fill="#6a6a6a"/><rect x="12" y="0" width="1" height="1" fill="#6a6a6a"/><rect x="12" y="3" width="1" height="1" fill="#6a6a6a"/><rect x="15" y="0" width="1" height="1" fill="#6a6a6a"/><rect x="15" y="3" width="1" height="1" fill="#6a6a6a"/><rect x="18" y="0" width="1" height="1" fill="#6a6a6a"/><rect x="18" y="3" width="1" height="1" fill="#6a6a6a"/><rect x="21" y="0" width="1" height="1" fill="#6a6a6a"/><rect x="21" y="3" width="1" height="1" fill="#6a6a6a"/><rect x="24" y="0" width="1" height="1" fill="#6a6a6a"/><rect x="24" y="3" width="1" height="1" fill="#6a6a6a"/><rect x="27" y="0" width="1" height="1" fill="#6a6a6a"/><rect x="27" y="3" width="1" height="1" fill="#6a6a6a"/><rect x="30" y="0" width="1" height="1" fill="#6a6a6a"/><rect x="30" y="3" width="1" height="1" fill="#6a6a6a"/><rect x="33" y="0" width="1" height="1" fill="#6a6a6a"/><rect x="33" y="3" width="1" height="1" fill="#6a6a6a"/><rect x="36" y="0" width="1" height="1" fill="#6a6a6a"/><rect x="36" y="3" width="1" height="1" fill="#6a6a6a"/><rect x="39" y="0" width="1" height="1" fill="#6a6a6a"/><rect x="39" y="3" width="1" height="1" fill="#6a6a6a"/></svg>
<div style="left:44px;top:152px;width:3px;height:722px;background:#3a3a3a;"></div>
<div style="left:4px;top:163px;width:36px;height:36px;background:#5285a6;"></div>
<svg style="position:absolute;left:4px;top:163px;" width="36" height="36" viewBox="0 0 36 36"><path d="M13 6 L13 28 L18 23 L22 31 L25.5 29.5 L21.5 21.5 L28 21.5Z" fill="#cfcfcf" stroke="#333" stroke-width="0.9"/></svg>
<svg style="position:absolute;left:6px;top:203px;" width="34" height="30" viewBox="0 0 34 30"><ellipse cx="13" cy="13" rx="11" ry="7" transform="rotate(-25 13 13)" fill="none" stroke="#4ab5c2" stroke-width="2.2" stroke-dasharray="3.5 2.5"/><path d="M16 10 L16 28 L20 24 L23.5 30 L26 29 L23 23 L28 23Z" fill="#cfcfcf" stroke="#333" stroke-width="0.7"/></svg>
<svg style="position:absolute;left:6px;top:240px;" width="34" height="30" viewBox="0 0 34 30"><ellipse cx="12" cy="18" rx="10" ry="7" transform="rotate(25 12 18)" fill="none" stroke="#4ab5c2" stroke-width="2.2" stroke-dasharray="3.5 2.5"/><path d="M28 4 L16 16 Q12 20 9 19 Q13 23 18 19 L30 6Z" fill="#cfcfcf"/></svg>
<svg style="position:absolute;left:8px;top:277px;" width="30" height="30" viewBox="0 0 30 30"><rect x="8.5" y="8.5" width="12.5" height="12.5" fill="#cfcfcf"/><path d="M15 1 L18.5 4.5 H11.5Z M15 29 L18.5 25.5 H11.5Z M1 15 L4.5 11.5 V18.5Z M29 15 L25.5 11.5 V18.5Z" fill="#4ab5c2"/></svg>
<svg style="position:absolute;left:6px;top:314px;" width="34" height="30" viewBox="0 0 34 30"><path d="M16 28 A13 13 0 1 1 29 16" fill="none" stroke="#4ab5c2" stroke-width="1.6"/><path d="M26.5 15 L31.5 15 L29 19.5Z" fill="#4ab5c2"/><path d="M17 8 L25 16 L17 24 L9 16Z" fill="#cfcfcf"/></svg>
<svg style="position:absolute;left:8px;top:351px;" width="28" height="28" viewBox="0 0 28 28"><rect x="1.5" y="1.5" width="24" height="24" fill="none" stroke="#4ab5c2" stroke-width="1.3" stroke-dasharray="3 2"/><rect x="1.5" y="15" width="11" height="11" fill="#cfcfcf"/><path d="M14 13 V10 H18 V14" fill="none" stroke="#4ab5c2" stroke-width="1.2"/></svg>
<div style="left:4px;top:463px;width:36px;height:2px;background:#a8a8a8;"></div>
<svg style="position:absolute;left:8px;top:474px;" width="28" height="28" viewBox="0 0 28 28"><rect x="1" y="1" width="26" height="26" fill="none" stroke="#c8c8c8" stroke-width="2"/><rect x="4" y="4" width="20" height="20" fill="#c8c8c8"/><path d="M14 7 L17 10 L14 13 L11 10Z M14 15 L17 18 L14 21 L11 18Z M10 11 L13 14 L10 17 L7 14Z M18 11 L21 14 L18 17 L15 14Z" fill="#333"/></svg>
<svg style="position:absolute;left:8px;top:511px;" width="28" height="28" viewBox="0 0 28 28"><rect x="0.5" y="0.5" width="12" height="12" fill="none" stroke="#c8c8c8"/><path d="M6.5 2.5 V10.5 M2.5 6.5 H10.5" stroke="#c8c8c8"/><rect x="15" y="0" width="13" height="13" fill="#c8c8c8"/><path d="M21.5 3.5 L25 6.5 L21.5 9.5 L18 6.5Z" fill="#333"/><rect x="0.5" y="15.5" width="12" height="12" fill="none" stroke="#c8c8c8"/><path d="M6.5 17.5 V25.5 M2.5 21.5 H10.5" stroke="#c8c8c8"/><rect x="15.5" y="15.5" width="12" height="12" fill="none" stroke="#c8c8c8"/><path d="M21.5 17.5 V25.5 M17.5 21.5 H25.5" stroke="#c8c8c8"/></svg>
<svg style="position:absolute;left:8px;top:547px;" width="28" height="29" viewBox="0 0 28 29"><rect x="0.5" y="0.5" width="12" height="28" fill="none" stroke="#c8c8c8"/><path d="M6.5 10.5 V18.5 M2.5 14.5 H10.5" stroke="#c8c8c8"/><rect x="15" y="0" width="13" height="29" fill="#c8c8c8"/><path d="M21.5 11 L25 14.5 L21.5 18 L18 14.5Z" fill="#333"/></svg>
<div style="left:4px;top:580px;width:36px;height:37px;background:#5285a6;"></div>
<svg style="position:absolute;left:7px;top:583px;" width="30" height="31" viewBox="0 0 30 31"><rect x="1" y="1" width="28" height="29" fill="none" stroke="#d8d8d8" stroke-width="1.3"/><rect x="4" y="4" width="22" height="23" fill="none" stroke="#d8d8d8" stroke-width="1"/><path d="M8 7.5 H18 M11 9 V23 M11 11.5 H22 M11 17 H20 M11 22 H22" stroke="#d8d8d8" stroke-width="1"/><rect x="6" y="6" width="3" height="3" fill="#d8d8d8"/><rect x="12" y="10" width="3" height="3" fill="#d8d8d8"/><rect x="12" y="15.5" width="3" height="3" fill="#d8d8d8"/><rect x="12" y="20.5" width="3" height="3" fill="#d8d8d8"/></svg>
<div style="left:4px;top:622px;width:36px;height:2px;background:#a8a8a8;"></div>
<svg style="position:absolute;left:10px;top:635px;" width="25" height="25" viewBox="0 0 25 25"><circle cx="9.5" cy="9.5" r="7" fill="none" stroke="#c8c8c8" stroke-width="2.2"/><path d="M14.5 14.5 L21.5 21.5" stroke="#c8c8c8" stroke-width="3" stroke-linecap="round"/></svg>
<svg style="position:absolute;left:7px;top:836px;" width="31" height="34" viewBox="0 0 31 34"><g transform="scale(1.0)"><path d="M0 4 L5 0 H27 Q29 0 29 2 V26 L5 26 L0 28Z" fill="#8fd3f0"/><path d="M5 0 H27 Q29 0 29 2 V25 H5Z" fill="#36a3d3"/><path d="M5 20 H29 V31 Q29 32 28 32 H5Z" fill="#2b7ca3"/><text x="17" y="17" font-family="Liberation Sans" font-weight="700" font-size="15" fill="#fff" text-anchor="middle">M</text><text x="17" y="29.5" font-family="Liberation Sans" font-weight="700" font-size="6.5" fill="#e8f4fa" text-anchor="middle">AYA</text></g></svg>
<div style="left:47px;top:152px;width:291px;height:722px;background:#444444;"></div>
<div style="left:112px;top:152px;width:226px;height:17px;background:#3a3a3a;"></div>
<div style="left:47px;top:152px;width:65px;height:18px;background:#444444;"></div>
<div class="t" style="left:58px;top:155.0px;line-height:15px;font-size:11.5px;color:#e0e0e0;font-weight:400;font-family:'Liberation Sans',sans-serif;">Outliner</div>
<div class="t" style="left:57px;top:173.5px;line-height:15px;font-size:11.5px;color:#c4c4c4;font-weight:400;font-family:'Liberation Sans',sans-serif;">Display</div>
<div class="t" style="left:109px;top:173.5px;line-height:15px;font-size:11.5px;color:#c4c4c4;font-weight:400;font-family:'Liberation Sans',sans-serif;">Show</div>
<div class="t" style="left:153px;top:173.5px;line-height:15px;font-size:11.5px;color:#c4c4c4;font-weight:400;font-family:'Liberation Sans',sans-serif;">Help</div>
<svg style="position:absolute;left:54px;top:198px;" width="16" height="16" viewBox="0 0 16 16"><path d="M1 4 V1 H4 M12 1 H15 V4 M15 12 V15 H12 M4 15 H1 V12" fill="none" stroke="#777" stroke-width="1.3"/><path d="M3 8 L5.5 5.5 V10.5Z M13 8 L10.5 5.5 V10.5Z" fill="#666"/><path d="M6 3 H10 M6 13 H10" stroke="#666"/></svg>
<div style="left:77px;top:197px;width:257px;height:19px;background:#2b2b2b;border-radius:3px"></div>
<div class="t" style="left:80px;top:199.0px;line-height:15px;font-size:11.5px;color:#8c8c8c;font-weight:400;font-family:'Liberation Sans',sans-serif;">Search...</div>
<svg style="position:absolute;left:319px;top:203px;" width="11" height="7" viewBox="0 0 11 7"><path d="M0 0 H11 L5.5 6Z" fill="#cfcfcf"/></svg>
<div style="left:50px;top:218px;width:284px;height:646px;background:#373737;"></div>
<svg style="position:absolute;left:323px;top:220px;" width="11" height="8" viewBox="0 0 11 8"><path d="M1 6.5 L5.5 1 L10 6.5Z" fill="#cfcfcf"/></svg>
<div style="left:324px;top:230px;width:10px;height:608px;background:#5a5a5a;border-radius:5px"></div>
<svg style="position:absolute;left:323px;top:841px;" width="11" height="8" viewBox="0 0 11 8"><path d="M1 1 L5.5 6.5 L10 1Z" fill="#cfcfcf"/></svg>
<div style="left:50px;top:218px;width:273px;height:20px;background:#2b2b2b;"></div>
<svg style="position:absolute;left:86px;top:222px;" width="15" height="12" viewBox="0 0 15 12"><rect x="0" y="2" width="10" height="8" rx="1" fill="#c8c8c8"/><path d="M10.5 6 L14 2 V10Z" fill="#c8c8c8"/></svg>
<div class="t" style="left:104.5px;top:220.5px;line-height:15px;font-size:11.5px;color:#727272;font-weight:400;font-family:'Liberation Sans',sans-serif;">persp</div>
<svg style="position:absolute;left:86px;top:242px;" width="15" height="12" viewBox="0 0 15 12"><rect x="0" y="2" width="10" height="8" rx="1" fill="#c8c8c8"/><path d="M10.5 6 L14 2 V10Z" fill="#c8c8c8"/></svg>
<div class="t" style="left:104.5px;top:240.5px;line-height:15px;font-size:11.5px;color:#727272;font-weight:400;font-family:'Liberation Sans',sans-serif;">top</div>
<svg style="position:absolute;left:86px;top:262px;" width="15" height="12" viewBox="0 0 15 12"><rect x="0" y="2" width="10" height="8" rx="1" fill="#c8c8c8"/><path d="M10.5 6 L14 2 V10Z" fill="#c8c8c8"/></svg>
<div class="t" style="left:104.5px;top:260.5px;line-height:15px;font-size:11.5px;color:#727272;font-weight:400;font-family:'Liberation Sans',sans-serif;">front</div>
<svg style="position:absolute;left:86px;top:282px;" width="15" height="12" viewBox="0 0 15 12"><rect x="0" y="2" width="10" height="8" rx="1" fill="#c8c8c8"/><path d="M10.5 6 L14 2 V10Z" fill="#c8c8c8"/></svg>
<div class="t" style="left:104.5px;top:280.5px;line-height:15px;font-size:11.5px;color:#727272;font-weight:400;font-family:'Liberation Sans',sans-serif;">side</div>
<div style="left:50px;top:298px;width:273px;height:20px;background:#5285a6;"></div>
<svg style="position:absolute;left:84px;top:301px;" width="18" height="14" viewBox="0 0 18 14"><path d="M9 0.5 L17.5 7 L9 13.5 L0.5 7Z" fill="#dedede" stroke="#3a3a3a" stroke-width="0.8"/><path d="M4.75 3.75 L13.25 10.25 M13.25 3.75 L4.75 10.25" stroke="#3a3a3a" stroke-width="1.6"/></svg>
<div class="t" style="left:104.5px;top:300.5px;line-height:15px;font-size:11.5px;color:#ffffff;font-weight:400;font-family:'Liberation Sans',sans-serif;">geo_ground</div>
<svg style="position:absolute;left:70px;top:323px;" width="10" height="10" viewBox="0 0 10 10"><rect x="0.5" y="0.5" width="9" height="9" fill="none" stroke="#b0b0b0"/><path d="M5 2.5 V7.5 M2.5 5 H7.5" stroke="#b0b0b0"/></svg>
<svg style="position:absolute;left:86px;top:320px;" width="16" height="16" viewBox="0 0 16 16"><path d="M2 3 L6 1 V13 L2 15Z" fill="#b8b8b8"/><path d="M6 5 L10 3 V14 L6 16Z" fill="#a0a0a0"/><path d="M10 6 L14 4 V14 L10 16Z" fill="#b8b8b8"/></svg>
<div class="t" style="left:104.5px;top:320.5px;line-height:15px;font-size:11.5px;color:#6c6c6c;font-weight:400;font-family:'Liberation Sans',sans-serif;">shotcam_group</div>
<svg style="position:absolute;left:85px;top:340px;" width="16" height="16" viewBox="0 0 16 16"><circle cx="8" cy="8" r="7" fill="none" stroke="#c8c8c8" stroke-width="1.3"/><circle cx="6" cy="10" r="2.6" fill="#c8c8c8"/><path d="M7.5 5 H11.5 V10.5 L9 11 V7.5 H7.5Z" fill="#4ab5c2"/></svg>
<div class="t" style="left:104.5px;top:340.5px;line-height:15px;font-size:11.5px;color:#d0d0d0;font-weight:400;font-family:'Liberation Sans',sans-serif;">defaultLightSet</div>
<svg style="position:absolute;left:85px;top:360px;" width="16" height="16" viewBox="0 0 16 16"><circle cx="8" cy="8" r="7" fill="none" stroke="#c8c8c8" stroke-width="1.3"/><circle cx="6" cy="10" r="2.6" fill="#c8c8c8"/><path d="M7.5 5 H11.5 V10.5 L9 11 V7.5 H7.5Z" fill="#4ab5c2"/></svg>
<div class="t" style="left:104.5px;top:360.5px;line-height:15px;font-size:11.5px;color:#d0d0d0;font-weight:400;font-family:'Liberation Sans',sans-serif;">defaultObjectSet</div>
<svg style="position:absolute;left:51px;top:853px;" width="8" height="10" viewBox="0 0 8 10"><path d="M7 1 L1.5 5 L7 9Z" fill="#cfcfcf"/></svg>
<div style="left:62px;top:854px;width:247px;height:10px;background:#5a5a5a;border-radius:5px"></div>
<svg style="position:absolute;left:312px;top:853px;" width="8" height="10" viewBox="0 0 8 10"><path d="M1 1 L6.5 5 L1 9Z" fill="#cfcfcf"/></svg>
<svg style="position:absolute;left:144px;top:867px;" width="94" height="1" viewBox="0 0 94 1"><rect x="0" y="0" width="1" height="1" fill="#777"/><rect x="2" y="0" width="1" height="1" fill="#777"/><rect x="4" y="0" width="1" height="1" fill="#777"/><rect x="6" y="0" width="1" height="1" fill="#777"/><rect x="8" y="0" width="1" height="1" fill="#777"/><rect x="10" y="0" width="1" height="1" fill="#777"/><rect x="12" y="0" width="1" height="1" fill="#777"/><rect x="14" y="0" width="1" height="1" fill="#777"/><rect x="16" y="0" width="1" height="1" fill="#777"/><rect x="18" y="0" width="1" height="1" fill="#777"/><rect x="20" y="0" width="1" height="1" fill="#777"/><rect x="22" y="0" width="1" height="1" fill="#777"/><rect x="24" y="0" width="1" height="1" fill="#777"/><rect x="26" y="0" width="1" height="1" fill="#777"/><rect x="28" y="0" width="1" height="1" fill="#777"/><rect x="30" y="0" width="1" height="1" fill="#777"/><rect x="32" y="0" width="1" height="1" fill="#777"/><rect x="34" y="0" width="1" height="1" fill="#777"/><rect x="36" y="0" width="1" height="1" fill="#777"/><rect x="38" y="0" width="1" height="1" fill="#777"/><rect x="40" y="0" width="1" height="1" fill="#777"/><rect x="42" y="0" width="1" height="1" fill="#777"/><rect x="44" y="0" width="1" height="1" fill="#777"/><rect x="46" y="0" width="1" height="1" fill="#777"/><rect x="48" y="0" width="1" height="1" fill="#777"/><rect x="50" y="0" width="1" height="1" fill="#777"/><rect x="52" y="0" width="1" height="1" fill="#777"/><rect x="54" y="0" width="1" height="1" fill="#777"/><rect x="56" y="0" width="1" height="1" fill="#777"/><rect x="58" y="0" width="1" height="1" fill="#777"/><rect x="60" y="0" width="1" height="1" fill="#777"/><rect x="62" y="0" width="1" height="1" fill="#777"/><rect x="64" y="0" width="1" height="1" fill="#777"/><rect x="66" y="0" width="1" height="1" fill="#777"/><rect x="68" y="0" width="1" height="1" fill="#777"/><rect x="70" y="0" width="1" height="1" fill="#777"/><rect x="72" y="0" width="1" height="1" fill="#777"/><rect x="74" y="0" width="1" height="1" fill="#777"/><rect x="76" y="0" width="1" height="1" fill="#777"/><rect x="78" y="0" width="1" height="1" fill="#777"/><rect x="80" y="0" width="1" height="1" fill="#777"/><rect x="82" y="0" width="1" height="1" fill="#777"/><rect x="84" y="0" width="1" height="1" fill="#777"/><rect x="86" y="0" width="1" height="1" fill="#777"/><rect x="88" y="0" width="1" height="1" fill="#777"/><rect x="90" y="0" width="1" height="1" fill="#777"/><rect x="92" y="0" width="1" height="1" fill="#777"/></svg>
<div style="left:338px;top:152px;width:5px;height:722px;background:#444444;"></div>
<div style="left:338px;top:152px;width:2px;height:722px;background:#373737;"></div>
<div style="left:343px;top:154px;width:1200px;height:717px;background:#8d8d8d;"></div>
<div style="left:344px;top:155px;width:1198px;height:41px;background:#444444;"></div>
<div class="t" style="left:352px;top:157.5px;line-height:15px;font-size:11.5px;color:#c8c8c8;font-weight:400;font-family:'Liberation Sans',sans-serif;">View</div>
<div class="t" style="left:392px;top:157.5px;line-height:15px;font-size:11.5px;color:#c8c8c8;font-weight:400;font-family:'Liberation Sans',sans-serif;">Shading</div>
<div class="t" style="left:450px;top:157.5px;line-height:15px;font-size:11.5px;color:#c8c8c8;font-weight:400;font-family:'Liberation Sans',sans-serif;">Lighting</div>
<div class="t" style="left:508px;top:157.5px;line-height:15px;font-size:11.5px;color:#c8c8c8;font-weight:400;font-family:'Liberation Sans',sans-serif;">Show</div>
<div class="t" style="left:552px;top:157.5px;line-height:15px;font-size:11.5px;color:#c8c8c8;font-weight:400;font-family:'Liberation Sans',sans-serif;">Renderer</div>
<div class="t" style="left:614px;top:157.5px;line-height:15px;font-size:11.5px;color:#c8c8c8;font-weight:400;font-family:'Liberation Sans',sans-serif;">Panels</div>
<svg style="position:absolute;left:346px;top:176px;" width="5" height="18" viewBox="0 0 5 18"><rect x="2" y="0" width="1" height="18" fill="#8a8a8a"/><rect x="1" y="5" width="3" height="8" rx="1" fill="#8a8a8a"/></svg>
<svg style="position:absolute;left:355px;top:176px;" width="17" height="18" viewBox="0 0 17 18"><path d="M1 3 L4 1 H16 V15 L13 17 H1Z" fill="#2b7ca3"/><rect x="1" y="3" width="13" height="14" fill="#46b0dc"/><text x="7.5" y="14" font-family="Liberation Sans" font-weight="700" font-size="10" fill="#fff" text-anchor="middle">A</text></svg>
<svg style="position:absolute;left:375px;top:177px;" width="15" height="15" viewBox="0 0 15 15"><rect x="2.5" y="2.5" width="10" height="10" fill="#4ab5c2" stroke="#9a9a9a" stroke-width="1"/><rect x="0" y="0" width="3" height="3" fill="#a89a9a"/><rect x="12" y="0" width="3" height="3" fill="#a89a9a"/><rect x="0" y="12" width="3" height="3" fill="#a89a9a"/><rect x="12" y="12" width="3" height="3" fill="#a89a9a"/></svg>
<svg style="position:absolute;left:394px;top:177px;" width="15" height="15" viewBox="0 0 15 15"><rect x="0" y="0" width="15" height="15" fill="#4e5458"/><path d="M5 0 V15 M0 5 H15" stroke="#444" stroke-width="1"/></svg>
<svg style="position:absolute;left:413px;top:177px;" width="14" height="15" viewBox="0 0 14 15"><circle cx="7" cy="7.5" r="6.5" fill="#555050"/></svg>
<svg style="position:absolute;left:431px;top:177px;" width="16" height="15" viewBox="0 0 16 15"><path d="M2 4 L5 1 H15 V11 L12 14 H2Z" fill="#4c5552"/><path d="M2 4 H12 V14" fill="none" stroke="#444"/></svg>
<svg style="position:absolute;left:451px;top:176px;" width="5" height="18" viewBox="0 0 5 18"><rect x="2" y="0" width="1" height="18" fill="#8a8a8a"/><rect x="1" y="5" width="3" height="8" rx="1" fill="#8a8a8a"/></svg>
<svg style="position:absolute;left:461px;top:178px;" width="16" height="14" viewBox="0 0 16 14"><rect x="0" y="2" width="10" height="10" fill="#cfcfcf"/><path d="M11 7 L15 2 V12Z" fill="#cfcfcf"/></svg>
<svg style="position:absolute;left:480px;top:177px;" width="16" height="16" viewBox="0 0 16 16"><rect x="4" y="3" width="8" height="8" fill="#cfcfcf"/><path d="M12 6 L16 1 V11Z" fill="#cfcfcf"/><rect x="0" y="9" width="7" height="6" fill="#4ab5c2"/><path d="M1.5 9 V7 A2 2 0 0 1 5.5 7 V9" fill="none" stroke="#4ab5c2" stroke-width="1.4"/></svg>
<svg style="position:absolute;left:499px;top:177px;" width="16" height="16" viewBox="0 0 16 16"><rect x="4" y="3" width="8" height="8" fill="#cfcfcf"/><path d="M12 6 L16 1 V11Z" fill="#cfcfcf"/><circle cx="5" cy="11" r="4" fill="#4ab5c2"/><circle cx="5" cy="11" r="1.5" fill="#444"/></svg>
<svg style="position:absolute;left:522px;top:177px;" width="8" height="15" viewBox="0 0 8 15"><path d="M0 0 H8 V15 L4 11 L0 15Z" fill="#cfcfcf"/></svg>
<svg style="position:absolute;left:537px;top:177px;" width="16" height="16" viewBox="0 0 16 16"><path d="M7 1 L13 4 V12 L7 9Z" fill="#4ab5c2"/><path d="M7 1 V9 L1 15" fill="none" stroke="#cfcfcf" stroke-width="1.2"/><path d="M3 13 H15 M4 15 H14" stroke="#cfcfcf"/></svg>
<svg style="position:absolute;left:557px;top:176px;" width="16" height="17" viewBox="0 0 16 17"><path d="M6 0 L6 9 M2 4 H10" stroke="#cfcfcf" stroke-width="1.2"/><path d="M4 2 L6 0 L8 2 M1 4 L3 2.5 M1 4 L3 5.5" fill="none" stroke="#cfcfcf"/><circle cx="10" cy="10" r="3.5" fill="none" stroke="#4ab5c2" stroke-width="1.6"/><path d="M12.5 12.5 L15.5 15.5" stroke="#4ab5c2" stroke-width="2"/></svg>
<svg style="position:absolute;left:577px;top:177px;" width="13" height="15" viewBox="0 0 13 15"><path d="M1 14 L2 10 L10 1 L13 4 L4 13Z" fill="#4ab5c2"/></svg>
<svg style="position:absolute;left:595px;top:176px;" width="5" height="18" viewBox="0 0 5 18"><rect x="2" y="0" width="1" height="18" fill="#8a8a8a"/><rect x="1" y="5" width="3" height="8" rx="1" fill="#8a8a8a"/></svg>
<div style="left:604px;top:176px;width:18px;height:18px;background:#5285a6;"></div>
<svg style="position:absolute;left:606px;top:178px;" width="14" height="14" viewBox="0 0 14 14"><rect x="0.5" y="0.5" width="13" height="13" fill="none" stroke="#d8d8d8"/><path d="M4.5 1 V13 M9.5 1 V13 M1 4.5 H13 M1 9.5 H13" stroke="#d8d8d8"/></svg>
<svg style="position:absolute;left:624px;top:178px;" width="16" height="14" viewBox="0 0 16 14"><rect x="0.5" y="0.5" width="15" height="13" fill="none" stroke="#cfcfcf"/><path d="M1 3 H15 M1 11 H15" stroke="#cfcfcf"/><path d="M3 2 H4 M6 2 H7 M9 2 H10 M12 2 H13 M3 12 H4 M6 12 H7 M9 12 H10 M12 12 H13" stroke="#444"/></svg>
<svg style="position:absolute;left:644px;top:178px;" width="14" height="14" viewBox="0 0 14 14"><rect x="0.5" y="0.5" width="13" height="13" fill="none" stroke="#cfcfcf"/><circle cx="7" cy="7" r="2.8" fill="#4ab5c2"/></svg>
<div style="left:662px;top:176px;width:16px;height:18px;background:#3e3e3e;"></div>
<svg style="position:absolute;left:664px;top:178px;" width="12" height="14" viewBox="0 0 12 14"><circle cx="6" cy="7" r="4" fill="#555"/></svg>
<svg style="position:absolute;left:681px;top:178px;" width="15" height="14" viewBox="0 0 15 14"><rect x="0.5" y="0.5" width="14" height="13" fill="none" stroke="#cfcfcf"/><path d="M1 7 H14" stroke="#4ab5c2" stroke-dasharray="1 1"/><path d="M7.5 1 V13" stroke="#4ab5c2" stroke-dasharray="1 1"/></svg>
<svg style="position:absolute;left:700px;top:178px;" width="15" height="14" viewBox="0 0 15 14"><rect x="0.5" y="0.5" width="14" height="13" fill="none" stroke="#cfcfcf"/><path d="M2 12 L6 6 L9 12Z" fill="#4ab5c2"/><circle cx="10" cy="5" r="2.5" fill="#4ab5c2"/></svg>
<svg style="position:absolute;left:720px;top:178px;" width="14" height="14" viewBox="0 0 14 14"><rect x="0.5" y="0.5" width="13" height="13" fill="none" stroke="#cfcfcf"/><text x="7" y="12" font-family="Liberation Serif" font-weight="700" font-size="12" fill="#4ab5c2" text-anchor="middle">T</text></svg>
<svg style="position:absolute;left:739px;top:176px;" width="5" height="18" viewBox="0 0 5 18"><rect x="2" y="0" width="1" height="18" fill="#8a8a8a"/><rect x="1" y="5" width="3" height="8" rx="1" fill="#8a8a8a"/></svg>
<svg style="position:absolute;left:750px;top:177px;" width="14" height="15" viewBox="0 0 14 15"><path d="M7 1 L13 4 V11 L7 14 L1 11 V4Z M1 4 L7 7 L13 4 M7 7 V14" fill="none" stroke="#cfcfcf" stroke-width="1"/><path d="M1 11 L7 8 M13 11 L7 8 M7 1 V8" stroke="#cfcfcf" stroke-width="0.6" stroke-dasharray="1 1"/></svg>
<div style="left:767px;top:176px;width:18px;height:18px;background:#5285a6;"></div>
<svg style="position:absolute;left:769px;top:177px;" width="14" height="15" viewBox="0 0 14 15"><path d="M7 1 L13 4 V11 L7 14 L1 11 V4Z" fill="#5ed2e0"/><path d="M1 4 L7 7 L13 4 M7 7 V14" fill="none" stroke="#2b7c88" stroke-width="1"/><path d="M1 4 L7 1 L13 4 L7 7Z" fill="#9eeaf2"/></svg>
<svg style="position:absolute;left:789px;top:178px;" width="13" height="14" viewBox="0 0 13 14"><path d="M6.5 0.5 A6.5 6.5 0 0 0 6.5 13.5Z" fill="#cfcfcf"/><path d="M6.5 0.5 A6.5 6.5 0 0 1 6.5 13.5" fill="#888"/><path d="M7 2 H9 M8 4 H11 M7 6 H12 M8 8 H12 M7 10 H11 M8 12 H9" stroke="#cfcfcf"/></svg>
<svg style="position:absolute;left:807px;top:177px;" width="15" height="15" viewBox="0 0 15 15"><path d="M7.5 1 L14 4.5 V11 L7.5 14.5 L1 11 V4.5Z" fill="none" stroke="#cfcfcf"/><path d="M3.5 6 L7.5 8 L11.5 6 V10 L7.5 12 L3.5 10Z" fill="#4ab5c2"/><path d="M1 4.5 L7.5 8 L14 4.5 M7.5 8 V14.5" fill="none" stroke="#cfcfcf"/></svg>
<svg style="position:absolute;left:826px;top:178px;" width="14" height="14" viewBox="0 0 14 14"><defs><pattern id="chk" width="3" height="3" patternUnits="userSpaceOnUse"><rect width="1.5" height="1.5" fill="#d8d8d8"/><rect x="1.5" y="1.5" width="1.5" height="1.5" fill="#d8d8d8"/></pattern></defs><circle cx="7" cy="7" r="6.5" fill="#555"/><circle cx="7" cy="7" r="6.5" fill="url(#chk)"/></svg>
<svg style="position:absolute;left:845px;top:177px;" width="14" height="16" viewBox="0 0 14 16"><circle cx="7" cy="7" r="3.5" fill="#cfcfcf"/><rect x="5.5" y="10" width="3" height="4" fill="#cfcfcf"/><path d="M7 0 V1.5 M1 3 L2.5 4 M13 3 L11.5 4 M0 7.5 H1.5 M12.5 7.5 H14" stroke="#cfcfcf"/></svg>
<svg style="position:absolute;left:864px;top:177px;" width="15" height="15" viewBox="0 0 15 15"><circle cx="10" cy="6" r="5" fill="#4ab5c2"/><path d="M1 13 L5 9 M2 14 L7 10 M4 15 L8 12" stroke="#cfcfcf" stroke-width="1"/></svg>
<svg style="position:absolute;left:883px;top:176px;" width="5" height="18" viewBox="0 0 5 18"><rect x="2" y="0" width="1" height="18" fill="#8a8a8a"/><rect x="1" y="5" width="3" height="8" rx="1" fill="#8a8a8a"/></svg>
<svg style="position:absolute;left:895px;top:176px;" width="13" height="17" viewBox="0 0 13 17"><circle cx="6.5" cy="6" r="5.5" fill="#cfcfcf"/><path d="M0 13 L6 16 L13 13 M2 11 L7 14 L12 11" fill="none" stroke="#4ab5c2" stroke-width="1"/></svg>
<svg style="position:absolute;left:913px;top:176px;" width="15" height="17" viewBox="0 0 15 17"><circle cx="5" cy="11" r="5" fill="#6a6a6a"/><circle cx="10" cy="5.5" r="5" fill="#cfcfcf"/></svg>
<svg style="position:absolute;left:933px;top:177px;" width="13" height="15" viewBox="0 0 13 15"><path d="M6.5 1 A6.5 6.5 0 0 0 6.5 14" fill="none" stroke="#4ab5c2" stroke-width="2.2"/><path d="M6.5 1 A6.5 6.5 0 0 1 6.5 14" fill="none" stroke="#cfcfcf" stroke-width="1.5" stroke-dasharray="2 2"/></svg>
<div style="left:949px;top:176px;width:18px;height:18px;background:#3e3e3e;border:1px solid #383838;box-sizing:border-box"></div>
<svg style="position:absolute;left:952px;top:179px;" width="12" height="12" viewBox="0 0 12 12"><rect x="0" y="0" width="12" height="12" fill="#4a5654"/><rect x="3" y="3" width="7" height="7" fill="#4f6360"/></svg>
<svg style="position:absolute;left:970px;top:176px;" width="5" height="18" viewBox="0 0 5 18"><rect x="2" y="0" width="1" height="18" fill="#8a8a8a"/><rect x="1" y="5" width="3" height="8" rx="1" fill="#8a8a8a"/></svg>
<svg style="position:absolute;left:981px;top:177px;" width="15" height="16" viewBox="0 0 15 16"><rect x="0.5" y="0.5" width="9" height="9" fill="none" stroke="#4ab5c2" stroke-dasharray="2 1.5"/><path d="M6 5 L6 15 L8.5 12.5 L10.5 16 L12 15 L10 11.5 L13 11.5Z" fill="#cfcfcf"/></svg>
<svg style="position:absolute;left:1000px;top:176px;" width="5" height="18" viewBox="0 0 5 18"><rect x="2" y="0" width="1" height="18" fill="#8a8a8a"/><rect x="1" y="5" width="3" height="8" rx="1" fill="#8a8a8a"/></svg>
<svg style="position:absolute;left:1011px;top:178px;" width="14" height="14" viewBox="0 0 14 14"><rect x="4.5" y="0.5" width="9" height="9" fill="none" stroke="#cfcfcf" stroke-width="1.3"/><rect x="2.5" y="2.5" width="9" height="9" fill="none" stroke="#cfcfcf" stroke-width="1.3"/><rect x="0" y="5" width="9" height="9" fill="#cfcfcf"/></svg>
<svg style="position:absolute;left:1030px;top:178px;" width="14" height="14" viewBox="0 0 14 14"><rect x="4.5" y="0.5" width="9" height="9" fill="none" stroke="#cfcfcf" stroke-width="1.3"/><rect x="0" y="5" width="9" height="9" fill="#cfcfcf"/></svg>
<svg style="position:absolute;left:1049px;top:178px;" width="14" height="14" viewBox="0 0 14 14"><rect x="0.5" y="0.5" width="13" height="13" fill="none" stroke="#cfcfcf" stroke-width="1.2"/><path d="M3 3 L8 8" stroke="#cfcfcf" stroke-width="1.3"/><circle cx="9" cy="9" r="2" fill="#cfcfcf"/></svg>
<svg style="position:absolute;left:1068px;top:176px;" width="5" height="18" viewBox="0 0 5 18"><rect x="2" y="0" width="1" height="18" fill="#8a8a8a"/><rect x="1" y="5" width="3" height="8" rx="1" fill="#8a8a8a"/></svg>
<svg style="position:absolute;left:1080px;top:178px;" width="14" height="14" viewBox="0 0 14 14"><circle cx="7" cy="7" r="6.5" fill="#cfcfcf"/><path d="M7 3 L10.5 5 V9 L7 11 L3.5 9 V5Z" fill="#444"/><path d="M7 0.5 L7 3 M13 5 L10.5 5 M11 12 L10.5 9 M1 9 L3.5 9 M3 2 L3.5 5 M7 13.5 L7 11" stroke="#444" stroke-width="0.8"/></svg>
<div style="left:1098px;top:177px;width:38px;height:14px;background:#2b2b2b;border-radius:2px"></div>
<div class="t" style="left:1102px;top:177.5px;line-height:15px;font-size:11.5px;color:#d0d0d0;font-weight:400;font-family:'Liberation Sans',sans-serif;">0.00</div>
<svg style="position:absolute;left:1143px;top:178px;" width="11" height="14" viewBox="0 0 11 14"><rect x="4" y="0" width="7" height="14" fill="#cfcfcf"/><path d="M4 3 A4 4 0 0 0 4 11Z" fill="#cfcfcf"/></svg>
<div style="left:1159px;top:177px;width:38px;height:14px;background:#2b2b2b;border-radius:2px"></div>
<div class="t" style="left:1163px;top:177.5px;line-height:15px;font-size:11.5px;color:#d0d0d0;font-weight:400;font-family:'Liberation Sans',sans-serif;">1.00</div>
<div style="left:1200px;top:176px;width:18px;height:18px;background:#5285a6;"></div>
<svg style="position:absolute;left:1201px;top:177px;" width="16" height="16" viewBox="0 0 16 16"><circle cx="8" cy="8" r="6.5" fill="none" stroke="#4ab5c2" stroke-width="1.4"/><circle cx="8" cy="8" r="5.2" fill="#3d8f9a" fill-opacity="0.4"/><text x="8" y="10.3" font-family="Liberation Sans" font-size="6" font-weight="700" fill="#2a2a2a" text-anchor="middle">ON</text></svg>
<div style="left:1221px;top:176px;width:215px;height:17px;background:#555555;border-radius:2px"></div>
<div style="left:1415px;top:176px;width:1px;height:17px;background:#4a4a4a;"></div>
<div class="t" style="left:1225px;top:179.0px;line-height:14px;font-size:10.8px;color:#d6d6d6;font-weight:400;font-family:'Liberation Sans',sans-serif;">sRGB gamma (legacy)</div>
<svg style="position:absolute;left:1421px;top:181px;" width="11" height="7" viewBox="0 0 11 7"><path d="M0 0 H11 L5.5 6Z" fill="#d6d6d6"/></svg>
<svg style="position:absolute;left:344px;top:196px;" width="1198" height="674" viewBox="0 0 1198 674"><rect width="1198" height="674" fill="#5d5d5d"/><polygon points="454.30,202.65 1064.71,277.33 973.40,708.93 -45.28,442.52" fill="#888888"/><g stroke="#62eaa8" stroke-width="1.2" shape-rendering="crispEdges"><line x1="454.30" y1="202.65" x2="-45.28" y2="442.52"/><line x1="454.30" y1="202.65" x2="1064.71" y2="277.33"/><line x1="504.90" y1="208.84" x2="26.25" y2="461.23"/><line x1="423.93" y1="217.23" x2="1060.03" y2="299.47"/><line x1="557.46" y1="215.27" x2="102.69" y2="481.22"/><line x1="390.80" y1="233.14" x2="1054.80" y2="324.15"/><line x1="612.10" y1="221.95" x2="184.54" y2="502.62"/><line x1="354.50" y1="250.56" x2="1048.95" y2="351.82"/><line x1="668.94" y1="228.91" x2="272.40" y2="525.60"/><line x1="314.56" y1="269.74" x2="1042.34" y2="383.07"/><line x1="728.11" y1="236.15" x2="366.96" y2="550.33"/><line x1="270.41" y1="290.94" x2="1034.82" y2="418.63"/><line x1="789.78" y1="243.69" x2="469.02" y2="577.02"/><line x1="221.34" y1="314.50" x2="1026.18" y2="459.47"/><line x1="854.09" y1="251.56" x2="579.50" y2="605.92"/><line x1="166.48" y1="340.84" x2="1016.15" y2="506.85"/><line x1="921.22" y1="259.77" x2="699.50" y2="637.30"/><line x1="104.74" y1="370.48" x2="1004.39" y2="562.48"/><line x1="991.36" y1="268.35" x2="830.29" y2="671.51"/><line x1="34.75" y1="404.09" x2="990.37" y2="628.72"/><line x1="1064.71" y1="277.33" x2="973.40" y2="708.93"/><line x1="-45.28" y1="442.52" x2="973.40" y2="708.93"/></g></svg>
<svg style="position:absolute;left:1440px;top:215px;" width="80" height="80" viewBox="0 0 80 80"><defs><linearGradient id="cf" x1="0" y1="0" x2="0" y2="1"><stop offset="0" stop-color="#bcbcbc"/><stop offset="1" stop-color="#a9a9a9"/></linearGradient></defs><path d="M13 20.8 L36.7 10 L72.5 14 L57.5 25Z" fill="#a4a4a4"/><path d="M13 20.8 L57.5 25 L56.3 72.5 L15 63.3Z" fill="url(#cf)"/><path d="M57.5 25 L72.5 14 L71.3 53.3 L56.3 72.5Z" fill="#a0a0a0"/><path d="M13 20.8 L57.5 25 L72.5 14 M57.5 25 L56.3 72.5" fill="none" stroke="#6a6a6a" stroke-width="1.8"/><path d="M33 16 L45 17" stroke="#8c8c8c" stroke-width="2.2"/><text x="35" y="51.5" font-family="Liberation Sans" font-size="9" font-weight="700" fill="#5a5a5a" transform="rotate(4 35 48)" text-anchor="middle" textLength="31" lengthAdjust="spacingAndGlyphs">FRONT</text><path d="M63 45 L68 34" stroke="#8a8a8a" stroke-width="2.5"/></svg>
<div class="t" style="left:922px;top:849.5px;line-height:15px;font-size:11.5px;color:#f0f0f0;font-weight:700;font-family:'Liberation Sans',sans-serif;">persp</div>
<svg style="position:absolute;left:358px;top:822px;" width="28" height="30" viewBox="0 0 28 30"><path d="M11 10 V24" stroke="#22cc22" stroke-width="1.4"/><text x="8" y="9" font-family="Liberation Sans" font-size="8" font-weight="700" fill="#22cc22">y</text><path d="M11 24 L25 24" stroke="#dd2222" stroke-width="1.4"/><path d="M22 21 L26 26 M26 21 L22 26" stroke="#dd2222" stroke-width="1.2"/><path d="M11 24 L5 27" stroke="#2233ee" stroke-width="1.4"/><text x="2" y="28" font-family="Liberation Sans" font-size="8" font-weight="700" fill="#2233ee">z</text></svg>
<div style="left:1543px;top:152px;width:4px;height:722px;background:#444444;"></div>
<div style="left:1547px;top:152px;width:356px;height:722px;background:#444444;"></div>
<div style="left:1546px;top:152px;width:2px;height:722px;background:#393939;"></div>
<svg style="position:absolute;left:1840px;top:155px;" width="15" height="15" viewBox="0 0 15 15"><path d="M7.5 1 L10 5.5 H5Z" fill="#3fbf3f"/><path d="M1 14 L3.5 9.5 L6 14Z" fill="#3f6fe8"/><path d="M9 14 L11.5 9.5 L14 14Z" fill="#e84040"/><path d="M7.5 5 V10 L3.5 12 M7.5 10 L11.5 12" stroke="#cfcfcf" stroke-width="1.3" fill="none"/></svg>
<svg style="position:absolute;left:1861px;top:155px;" width="15" height="15" viewBox="0 0 15 15"><path d="M3 12 A6 6 0 1 1 13 9" fill="none" stroke="#4ab5c2" stroke-width="3"/><circle cx="9" cy="10" r="2.5" fill="#888"/></svg>
<svg style="position:absolute;left:1882px;top:155px;" width="15" height="15" viewBox="0 0 15 15"><path d="M1 1 V14 H14" fill="none" stroke="#888" stroke-width="1"/><path d="M3 12 L13 2" stroke="#4ab5c2" stroke-width="1.8"/><path d="M9 2 H13.5 V6.5Z" fill="#4ab5c2"/></svg>
<div class="t" style="left:1560px;top:177.5px;line-height:15px;font-size:11.5px;color:#c4c4c4;font-weight:400;font-family:'Liberation Sans',sans-serif;">Channels</div>
<div class="t" style="left:1623px;top:177.5px;line-height:15px;font-size:11.5px;color:#c4c4c4;font-weight:400;font-family:'Liberation Sans',sans-serif;">Edit</div>
<div class="t" style="left:1659px;top:177.5px;line-height:15px;font-size:11.5px;color:#c4c4c4;font-weight:400;font-family:'Liberation Sans',sans-serif;">Object</div>
<div class="t" style="left:1707px;top:177.5px;line-height:15px;font-size:11.5px;color:#c4c4c4;font-weight:400;font-family:'Liberation Sans',sans-serif;">Show</div>
<div class="t" style="left:1557px;top:202.0px;line-height:13px;font-size:9.8px;color:#d0d0d0;font-weight:700;font-family:'Liberation Sans',sans-serif;">geo_ground</div>
<div style="left:1820px;top:216px;width:74px;height:14px;background:#2b2b2b;"></div>
<div class="t" style="left:1640px;top:216.5px;line-height:14px;font-size:10.8px;color:#c4c4c4;font-weight:400;font-family:'Liberation Sans',sans-serif;width:174px;text-align:right">Translate X</div>
<div class="t" style="left:1828px;top:216.0px;line-height:15px;font-size:11.5px;color:#e0e0e0;font-weight:400;font-family:'Liberation Sans',sans-serif;">0</div>
<div style="left:1820px;top:232px;width:74px;height:14px;background:#2b2b2b;"></div>
<div class="t" style="left:1640px;top:232.5px;line-height:14px;font-size:10.8px;color:#c4c4c4;font-weight:400;font-family:'Liberation Sans',sans-serif;width:174px;text-align:right">Translate Y</div>
<div class="t" style="left:1828px;top:232.0px;line-height:15px;font-size:11.5px;color:#e0e0e0;font-weight:400;font-family:'Liberation Sans',sans-serif;">0</div>
<div style="left:1820px;top:248px;width:74px;height:14px;background:#2b2b2b;"></div>
<div class="t" style="left:1640px;top:248.5px;line-height:14px;font-size:10.8px;color:#c4c4c4;font-weight:400;font-family:'Liberation Sans',sans-serif;width:174px;text-align:right">Translate Z</div>
<div class="t" style="left:1828px;top:248.0px;line-height:15px;font-size:11.5px;color:#e0e0e0;font-weight:400;font-family:'Liberation Sans',sans-serif;">0</div>
<div style="left:1820px;top:264px;width:74px;height:14px;background:#2b2b2b;"></div>
<div class="t" style="left:1640px;top:264.5px;line-height:14px;font-size:10.8px;color:#c4c4c4;font-weight:400;font-family:'Liberation Sans',sans-serif;width:174px;text-align:right">Rotate X</div>
<div class="t" style="left:1828px;top:264.0px;line-height:15px;font-size:11.5px;color:#e0e0e0;font-weight:400;font-family:'Liberation Sans',sans-serif;">0</div>
<div style="left:1820px;top:280px;width:74px;height:14px;background:#2b2b2b;"></div>
<div class="t" style="left:1640px;top:280.5px;line-height:14px;font-size:10.8px;color:#c4c4c4;font-weight:400;font-family:'Liberation Sans',sans-serif;width:174px;text-align:right">Rotate Y</div>
<div class="t" style="left:1828px;top:280.0px;line-height:15px;font-size:11.5px;color:#e0e0e0;font-weight:400;font-family:'Liberation Sans',sans-serif;">0</div>
<div style="left:1820px;top:296px;width:74px;height:14px;background:#2b2b2b;"></div>
<div class="t" style="left:1640px;top:296.5px;line-height:14px;font-size:10.8px;color:#c4c4c4;font-weight:400;font-family:'Liberation Sans',sans-serif;width:174px;text-align:right">Rotate Z</div>
<div class="t" style="left:1828px;top:296.0px;line-height:15px;font-size:11.5px;color:#e0e0e0;font-weight:400;font-family:'Liberation Sans',sans-serif;">0</div>
<div style="left:1820px;top:312px;width:74px;height:14px;background:#2b2b2b;"></div>
<div class="t" style="left:1640px;top:312.5px;line-height:14px;font-size:10.8px;color:#c4c4c4;font-weight:400;font-family:'Liberation Sans',sans-serif;width:174px;text-align:right">Scale X</div>
<div class="t" style="left:1828px;top:312.0px;line-height:15px;font-size:11.5px;color:#e0e0e0;font-weight:400;font-family:'Liberation Sans',sans-serif;">500</div>
<div style="left:1820px;top:328px;width:74px;height:14px;background:#2b2b2b;"></div>
<div class="t" style="left:1640px;top:328.5px;line-height:14px;font-size:10.8px;color:#c4c4c4;font-weight:400;font-family:'Liberation Sans',sans-serif;width:174px;text-align:right">Scale Y</div>
<div class="t" style="left:1828px;top:328.0px;line-height:15px;font-size:11.5px;color:#e0e0e0;font-weight:400;font-family:'Liberation Sans',sans-serif;">500</div>
<div style="left:1820px;top:344px;width:74px;height:14px;background:#2b2b2b;"></div>
<div class="t" style="left:1640px;top:344.5px;line-height:14px;font-size:10.8px;color:#c4c4c4;font-weight:400;font-family:'Liberation Sans',sans-serif;width:174px;text-align:right">Scale Z</div>
<div class="t" style="left:1828px;top:344.0px;line-height:15px;font-size:11.5px;color:#e0e0e0;font-weight:400;font-family:'Liberation Sans',sans-serif;">500</div>
<div style="left:1820px;top:360px;width:74px;height:14px;background:#2b2b2b;"></div>
<div class="t" style="left:1640px;top:360.5px;line-height:14px;font-size:10.8px;color:#c4c4c4;font-weight:400;font-family:'Liberation Sans',sans-serif;width:174px;text-align:right">Visibility</div>
<div class="t" style="left:1828px;top:360.0px;line-height:15px;font-size:11.5px;color:#e0e0e0;font-weight:400;font-family:'Liberation Sans',sans-serif;">on</div>
<div class="t" style="left:1557px;top:378.5px;line-height:12px;font-size:9.4px;color:#c8c8c8;font-weight:700;font-family:'Liberation Sans',sans-serif;">SHAPES</div>
<div style="left:1556px;top:392px;width:338px;height:15px;background:#333333;"></div>
<div class="t" style="left:1566px;top:394.0px;line-height:12px;font-size:9.6px;color:#d0d0d0;font-weight:700;font-family:'Liberation Sans',sans-serif;">geo_groundShape</div>
<div class="t" style="left:1557px;top:410.5px;line-height:12px;font-size:9.4px;color:#c8c8c8;font-weight:700;font-family:'Liberation Sans',sans-serif;">INPUTS</div>
<div class="t" style="left:1566px;top:426.5px;line-height:12px;font-size:9.6px;color:#d0d0d0;font-weight:700;font-family:'Liberation Sans',sans-serif;">polyPlane1</div>
<div style="left:1556px;top:456px;width:339px;height:48px;background:#2b2b2b;"></div>
<svg style="position:absolute;left:1667px;top:510px;" width="116" height="1" viewBox="0 0 116 1"><rect x="0" y="0" width="1" height="1" fill="#888"/><rect x="3" y="0" width="1" height="1" fill="#888"/><rect x="6" y="0" width="1" height="1" fill="#888"/><rect x="9" y="0" width="1" height="1" fill="#888"/><rect x="12" y="0" width="1" height="1" fill="#888"/><rect x="15" y="0" width="1" height="1" fill="#888"/><rect x="18" y="0" width="1" height="1" fill="#888"/><rect x="21" y="0" width="1" height="1" fill="#888"/><rect x="24" y="0" width="1" height="1" fill="#888"/><rect x="27" y="0" width="1" height="1" fill="#888"/><rect x="30" y="0" width="1" height="1" fill="#888"/><rect x="33" y="0" width="1" height="1" fill="#888"/><rect x="36" y="0" width="1" height="1" fill="#888"/><rect x="39" y="0" width="1" height="1" fill="#888"/><rect x="42" y="0" width="1" height="1" fill="#888"/><rect x="45" y="0" width="1" height="1" fill="#888"/><rect x="48" y="0" width="1" height="1" fill="#888"/><rect x="51" y="0" width="1" height="1" fill="#888"/><rect x="54" y="0" width="1" height="1" fill="#888"/><rect x="57" y="0" width="1" height="1" fill="#888"/><rect x="60" y="0" width="1" height="1" fill="#888"/><rect x="63" y="0" width="1" height="1" fill="#888"/><rect x="66" y="0" width="1" height="1" fill="#888"/><rect x="69" y="0" width="1" height="1" fill="#888"/><rect x="72" y="0" width="1" height="1" fill="#888"/><rect x="75" y="0" width="1" height="1" fill="#888"/><rect x="78" y="0" width="1" height="1" fill="#888"/><rect x="81" y="0" width="1" height="1" fill="#888"/><rect x="84" y="0" width="1" height="1" fill="#888"/><rect x="87" y="0" width="1" height="1" fill="#888"/><rect x="90" y="0" width="1" height="1" fill="#888"/><rect x="93" y="0" width="1" height="1" fill="#888"/><rect x="96" y="0" width="1" height="1" fill="#888"/><rect x="99" y="0" width="1" height="1" fill="#888"/><rect x="102" y="0" width="1" height="1" fill="#888"/><rect x="105" y="0" width="1" height="1" fill="#888"/><rect x="108" y="0" width="1" height="1" fill="#888"/><rect x="111" y="0" width="1" height="1" fill="#888"/><rect x="114" y="0" width="1" height="1" fill="#888"/></svg>
<div style="left:1553px;top:519px;width:346px;height:18px;background:#3a3a3a;"></div>
<div style="left:1553px;top:519px;width:60px;height:19px;background:#444444;"></div>
<div class="t" style="left:1564px;top:522.5px;line-height:15px;font-size:11.5px;color:#e6e6e6;font-weight:400;font-family:'Liberation Sans',sans-serif;">Display</div>
<div style="left:1614px;top:521px;width:48px;height:16px;background:#3e3e3e;border:1px solid #333;border-bottom:none;box-sizing:border-box;border-radius:2px 2px 0 0"></div>
<div class="t" style="left:1625px;top:522.5px;line-height:15px;font-size:11.5px;color:#909090;font-weight:400;font-family:'Liberation Sans',sans-serif;">Anim</div>
<div style="left:1552px;top:537px;width:347px;height:333px;background:#444444;border:1px solid #333;border-top:none;box-sizing:border-box"></div>
<div class="t" style="left:1563px;top:542.0px;line-height:15px;font-size:11.5px;color:#c8c8c8;font-weight:400;font-family:'Liberation Sans',sans-serif;">Layers</div>
<div class="t" style="left:1609px;top:542.0px;line-height:15px;font-size:11.5px;color:#c8c8c8;font-weight:400;font-family:'Liberation Sans',sans-serif;">Options</div>
<div class="t" style="left:1666px;top:542.0px;line-height:15px;font-size:11.5px;color:#c8c8c8;font-weight:400;font-family:'Liberation Sans',sans-serif;">Help</div>
<svg style="position:absolute;left:1801px;top:563px;" width="17" height="15" viewBox="0 0 17 15"><path d="M0 8 L7 4 L12 8 L7 12Z" fill="#cfcfcf"/><path d="M12.5 14 V7 M9.5 9.5 L12.5 5.5 L15.5 9.5" fill="none" stroke="#4ab5c2" stroke-width="2"/></svg>
<svg style="position:absolute;left:1824px;top:563px;" width="17" height="15" viewBox="0 0 17 15"><path d="M0 8 L7 4 L12 8 L7 12Z" fill="#cfcfcf"/><path d="M12.5 4 V11 M9.5 8.5 L12.5 12.5 L15.5 8.5" fill="none" stroke="#4ab5c2" stroke-width="2"/></svg>
<svg style="position:absolute;left:1851px;top:562px;" width="17" height="16" viewBox="0 0 17 16"><path d="M0 10 L7 6 L13 10 L7 14Z" fill="#cfcfcf"/><path d="M12 1.5 V8.5 M8.5 5 H15.5" stroke="#4ab5c2" stroke-width="2"/></svg>
<svg style="position:absolute;left:1875px;top:562px;" width="16" height="16" viewBox="0 0 16 16"><path d="M0 10 L7 6 L13 10 L7 14Z" fill="#cfcfcf"/><circle cx="11.5" cy="5" r="3.5" fill="#4ab5c2"/></svg>
<div style="left:1556px;top:586px;width:339px;height:268px;background:#2b2b2b;"></div>
<div style="left:1556px;top:854px;width:339px;height:12px;background:#333333;"></div>
<svg style="position:absolute;left:1558px;top:855px;" width="7" height="10" viewBox="0 0 7 10"><path d="M6 1 L1 5 L6 9Z" fill="#cfcfcf"/></svg>
<div style="left:1569px;top:855px;width:299px;height:10px;background:#5a5a5a;border-radius:5px"></div>
<svg style="position:absolute;left:1884px;top:855px;" width="7" height="10" viewBox="0 0 7 10"><path d="M1 1 L6 5 L1 9Z" fill="#cfcfcf"/></svg>
<div style="left:1903px;top:152px;width:17px;height:722px;background:#3a3a3a;"></div>
<div style="left:1903px;top:152px;width:17px;height:148px;background:#444444;"></div>
<div style="left:1903px;top:301px;width:17px;height:114px;background:#3e3e3e;"></div>
<div style="left:1903px;top:416px;width:17px;height:107px;background:#3e3e3e;"></div>
<div style="left:1903px;top:300px;width:17px;height:1px;background:#333;"></div>
<div style="left:1903px;top:415px;width:17px;height:1px;background:#333;"></div>
<div style="left:1903px;top:523px;width:17px;height:1px;background:#333;"></div>
<div class="t" style="left:1811.5px;top:217.5px;width:200px;height:16px;line-height:16px;text-align:center;font-size:10.4px;color:#e0e0e0;letter-spacing:0px;transform:rotate(90deg) scale(1,1.2);font-family:'Liberation Sans',sans-serif">Channel Box / Layer Editor</div>
<div class="t" style="left:1811.5px;top:354.5px;width:200px;height:16px;line-height:16px;text-align:center;font-size:11px;color:#9c9c9c;letter-spacing:0.9px;transform:rotate(90deg) scale(1,1.2);font-family:'Liberation Sans',sans-serif">Attribute Editor</div>
<div class="t" style="left:1811.5px;top:464.5px;width:200px;height:16px;line-height:16px;text-align:center;font-size:11px;color:#9c9c9c;letter-spacing:0.5px;transform:rotate(90deg) scale(1,1.2);font-family:'Liberation Sans',sans-serif">Modeling Toolkit</div>
<div style="left:0px;top:874px;width:1920px;height:51px;background:#444444;"></div>
<div style="left:0px;top:873px;width:1920px;height:1px;background:#333333;"></div>
<svg style="position:absolute;left:3px;top:878px;" width="5" height="44" viewBox="0 0 5 44"><rect x="0" y="0" width="1" height="1" fill="#6a6a6a"/><rect x="0" y="3" width="1" height="1" fill="#6a6a6a"/><rect x="0" y="6" width="1" height="1" fill="#6a6a6a"/><rect x="0" y="9" width="1" height="1" fill="#6a6a6a"/><rect x="0" y="12" width="1" height="1" fill="#6a6a6a"/><rect x="0" y="15" width="1" height="1" fill="#6a6a6a"/><rect x="0" y="18" width="1" height="1" fill="#6a6a6a"/><rect x="0" y="21" width="1" height="1" fill="#6a6a6a"/><rect x="0" y="24" width="1" height="1" fill="#6a6a6a"/><rect x="0" y="27" width="1" height="1" fill="#6a6a6a"/><rect x="0" y="30" width="1" height="1" fill="#6a6a6a"/><rect x="0" y="33" width="1" height="1" fill="#6a6a6a"/><rect x="0" y="36" width="1" height="1" fill="#6a6a6a"/><rect x="0" y="39" width="1" height="1" fill="#6a6a6a"/><rect x="0" y="42" width="1" height="1" fill="#6a6a6a"/><rect x="3" y="0" width="1" height="1" fill="#6a6a6a"/><rect x="3" y="3" width="1" height="1" fill="#6a6a6a"/><rect x="3" y="6" width="1" height="1" fill="#6a6a6a"/><rect x="3" y="9" width="1" height="1" fill="#6a6a6a"/><rect x="3" y="12" width="1" height="1" fill="#6a6a6a"/><rect x="3" y="15" width="1" height="1" fill="#6a6a6a"/><rect x="3" y="18" width="1" height="1" fill="#6a6a6a"/><rect x="3" y="21" width="1" height="1" fill="#6a6a6a"/><rect x="3" y="24" width="1" height="1" fill="#6a6a6a"/><rect x="3" y="27" width="1" height="1" fill="#6a6a6a"/><rect x="3" y="30" width="1" height="1" fill="#6a6a6a"/><rect x="3" y="33" width="1" height="1" fill="#6a6a6a"/><rect x="3" y="36" width="1" height="1" fill="#6a6a6a"/><rect x="3" y="39" width="1" height="1" fill="#6a6a6a"/><rect x="3" y="42" width="1" height="1" fill="#6a6a6a"/></svg>
<div style="left:16px;top:874px;width:1613px;height:10px;background:#464646;"></div>
<div style="left:16px;top:884px;width:1613px;height:32px;background:#2b2b2b;"></div>
<div style="left:16px;top:916px;width:1613px;height:8px;background:#464646;"></div>
<div style="left:24px;top:876px;width:11px;height:8px;background:#5a5a5a;"></div>
<div style="left:24px;top:884px;width:11px;height:32px;background:#3a3a3a;"></div>
<div style="left:24px;top:916px;width:11px;height:8px;background:#5a5a5a;"></div>
<div class="t" style="left:78px;top:884.5px;line-height:15px;font-size:11.5px;color:#b4b4b4;font-weight:400;font-family:'Liberation Sans',sans-serif;">1005</div>
<div class="t" style="left:134px;top:884.5px;line-height:15px;font-size:11.5px;color:#b4b4b4;font-weight:400;font-family:'Liberation Sans',sans-serif;">1010</div>
<div class="t" style="left:191px;top:884.5px;line-height:15px;font-size:11.5px;color:#b4b4b4;font-weight:400;font-family:'Liberation Sans',sans-serif;">1015</div>
<div class="t" style="left:247px;top:884.5px;line-height:15px;font-size:11.5px;color:#b4b4b4;font-weight:400;font-family:'Liberation Sans',sans-serif;">1020</div>
<div class="t" style="left:304px;top:884.5px;line-height:15px;font-size:11.5px;color:#b4b4b4;font-weight:400;font-family:'Liberation Sans',sans-serif;">1025</div>
<div class="t" style="left:360px;top:884.5px;line-height:15px;font-size:11.5px;color:#b4b4b4;font-weight:400;font-family:'Liberation Sans',sans-serif;">1030</div>
<div class="t" style="left:417px;top:884.5px;line-height:15px;font-size:11.5px;color:#b4b4b4;font-weight:400;font-family:'Liberation Sans',sans-serif;">1035</div>
<div class="t" style="left:474px;top:884.5px;line-height:15px;font-size:11.5px;color:#b4b4b4;font-weight:400;font-family:'Liberation Sans',sans-serif;">1040</div>
<div class="t" style="left:530px;top:884.5px;line-height:15px;font-size:11.5px;color:#b4b4b4;font-weight:400;font-family:'Liberation Sans',sans-serif;">1045</div>
<div class="t" style="left:587px;top:884.5px;line-height:15px;font-size:11.5px;color:#b4b4b4;font-weight:400;font-family:'Liberation Sans',sans-serif;">1050</div>
<div class="t" style="left:644px;top:884.5px;line-height:15px;font-size:11.5px;color:#b4b4b4;font-weight:400;font-family:'Liberation Sans',sans-serif;">1055</div>
<div class="t" style="left:700px;top:884.5px;line-height:15px;font-size:11.5px;color:#b4b4b4;font-weight:400;font-family:'Liberation Sans',sans-serif;">1060</div>
<div class="t" style="left:757px;top:884.5px;line-height:15px;font-size:11.5px;color:#b4b4b4;font-weight:400;font-family:'Liberation Sans',sans-serif;">1065</div>
<div class="t" style="left:813px;top:884.5px;line-height:15px;font-size:11.5px;color:#b4b4b4;font-weight:400;font-family:'Liberation Sans',sans-serif;">1070</div>
<div class="t" style="left:870px;top:884.5px;line-height:15px;font-size:11.5px;color:#b4b4b4;font-weight:400;font-family:'Liberation Sans',sans-serif;">1075</div>
<div class="t" style="left:926px;top:884.5px;line-height:15px;font-size:11.5px;color:#b4b4b4;font-weight:400;font-family:'Liberation Sans',sans-serif;">1080</div>
<div class="t" style="left:983px;top:884.5px;line-height:15px;font-size:11.5px;color:#b4b4b4;font-weight:400;font-family:'Liberation Sans',sans-serif;">1085</div>
<div class="t" style="left:1040px;top:884.5px;line-height:15px;font-size:11.5px;color:#b4b4b4;font-weight:400;font-family:'Liberation Sans',sans-serif;">1090</div>
<div class="t" style="left:1096px;top:884.5px;line-height:15px;font-size:11.5px;color:#b4b4b4;font-weight:400;font-family:'Liberation Sans',sans-serif;">1095</div>
<div class="t" style="left:1153px;top:884.5px;line-height:15px;font-size:11.5px;color:#b4b4b4;font-weight:400;font-family:'Liberation Sans',sans-serif;">1100</div>
<div class="t" style="left:1210px;top:884.5px;line-height:15px;font-size:11.5px;color:#b4b4b4;font-weight:400;font-family:'Liberation Sans',sans-serif;">1105</div>
<div class="t" style="left:1266px;top:884.5px;line-height:15px;font-size:11.5px;color:#b4b4b4;font-weight:400;font-family:'Liberation Sans',sans-serif;">1110</div>
<div class="t" style="left:1323px;top:884.5px;line-height:15px;font-size:11.5px;color:#b4b4b4;font-weight:400;font-family:'Liberation Sans',sans-serif;">1115</div>
<div class="t" style="left:1379px;top:884.5px;line-height:15px;font-size:11.5px;color:#b4b4b4;font-weight:400;font-family:'Liberation Sans',sans-serif;">1120</div>
<div class="t" style="left:1436px;top:884.5px;line-height:15px;font-size:11.5px;color:#b4b4b4;font-weight:400;font-family:'Liberation Sans',sans-serif;">1125</div>
<div class="t" style="left:1492px;top:884.5px;line-height:15px;font-size:11.5px;color:#b4b4b4;font-weight:400;font-family:'Liberation Sans',sans-serif;">1130</div>
<div class="t" style="left:1549px;top:884.5px;line-height:15px;font-size:11.5px;color:#b4b4b4;font-weight:400;font-family:'Liberation Sans',sans-serif;">1135</div>
<div class="t" style="left:1606px;top:884.5px;line-height:15px;font-size:11.5px;color:#b4b4b4;font-weight:400;font-family:'Liberation Sans',sans-serif;">1140</div>
<svg style="position:absolute;left:16px;top:874px;" width="1613" height="51" viewBox="0 0 1613 51"><rect x="54" y="2" width="1" height="8" fill="#262626"/><rect x="54" y="42" width="1" height="8" fill="#262626"/><rect x="54" y="26" width="1" height="15" fill="#c0c0c0"/><rect x="110" y="2" width="1" height="8" fill="#262626"/><rect x="110" y="42" width="1" height="8" fill="#262626"/><rect x="110" y="26" width="1" height="15" fill="#c0c0c0"/><rect x="167" y="2" width="1" height="8" fill="#262626"/><rect x="167" y="42" width="1" height="8" fill="#262626"/><rect x="167" y="26" width="1" height="15" fill="#c0c0c0"/><rect x="223" y="2" width="1" height="8" fill="#262626"/><rect x="223" y="42" width="1" height="8" fill="#262626"/><rect x="223" y="26" width="1" height="15" fill="#c0c0c0"/><rect x="280" y="2" width="1" height="8" fill="#262626"/><rect x="280" y="42" width="1" height="8" fill="#262626"/><rect x="280" y="26" width="1" height="15" fill="#c0c0c0"/><rect x="336" y="2" width="1" height="8" fill="#262626"/><rect x="336" y="42" width="1" height="8" fill="#262626"/><rect x="336" y="26" width="1" height="15" fill="#c0c0c0"/><rect x="393" y="2" width="1" height="8" fill="#262626"/><rect x="393" y="42" width="1" height="8" fill="#262626"/><rect x="393" y="26" width="1" height="15" fill="#c0c0c0"/><rect x="450" y="2" width="1" height="8" fill="#262626"/><rect x="450" y="42" width="1" height="8" fill="#262626"/><rect x="450" y="26" width="1" height="15" fill="#c0c0c0"/><rect x="506" y="2" width="1" height="8" fill="#262626"/><rect x="506" y="42" width="1" height="8" fill="#262626"/><rect x="506" y="26" width="1" height="15" fill="#c0c0c0"/><rect x="563" y="2" width="1" height="8" fill="#262626"/><rect x="563" y="42" width="1" height="8" fill="#262626"/><rect x="563" y="26" width="1" height="15" fill="#c0c0c0"/><rect x="620" y="2" width="1" height="8" fill="#262626"/><rect x="620" y="42" width="1" height="8" fill="#262626"/><rect x="620" y="26" width="1" height="15" fill="#c0c0c0"/><rect x="676" y="2" width="1" height="8" fill="#262626"/><rect x="676" y="42" width="1" height="8" fill="#262626"/><rect x="676" y="26" width="1" height="15" fill="#c0c0c0"/><rect x="733" y="2" width="1" height="8" fill="#262626"/><rect x="733" y="42" width="1" height="8" fill="#262626"/><rect x="733" y="26" width="1" height="15" fill="#c0c0c0"/><rect x="789" y="2" width="1" height="8" fill="#262626"/><rect x="789" y="42" width="1" height="8" fill="#262626"/><rect x="789" y="26" width="1" height="15" fill="#c0c0c0"/><rect x="846" y="2" width="1" height="8" fill="#262626"/><rect x="846" y="42" width="1" height="8" fill="#262626"/><rect x="846" y="26" width="1" height="15" fill="#c0c0c0"/><rect x="902" y="2" width="1" height="8" fill="#262626"/><rect x="902" y="42" width="1" height="8" fill="#262626"/><rect x="902" y="26" width="1" height="15" fill="#c0c0c0"/><rect x="959" y="2" width="1" height="8" fill="#262626"/><rect x="959" y="42" width="1" height="8" fill="#262626"/><rect x="959" y="26" width="1" height="15" fill="#c0c0c0"/><rect x="1016" y="2" width="1" height="8" fill="#262626"/><rect x="1016" y="42" width="1" height="8" fill="#262626"/><rect x="1016" y="26" width="1" height="15" fill="#c0c0c0"/><rect x="1072" y="2" width="1" height="8" fill="#262626"/><rect x="1072" y="42" width="1" height="8" fill="#262626"/><rect x="1072" y="26" width="1" height="15" fill="#c0c0c0"/><rect x="1129" y="2" width="1" height="8" fill="#262626"/><rect x="1129" y="42" width="1" height="8" fill="#262626"/><rect x="1129" y="26" width="1" height="15" fill="#c0c0c0"/><rect x="1186" y="2" width="1" height="8" fill="#262626"/><rect x="1186" y="42" width="1" height="8" fill="#262626"/><rect x="1186" y="26" width="1" height="15" fill="#c0c0c0"/><rect x="1242" y="2" width="1" height="8" fill="#262626"/><rect x="1242" y="42" width="1" height="8" fill="#262626"/><rect x="1242" y="26" width="1" height="15" fill="#c0c0c0"/><rect x="1299" y="2" width="1" height="8" fill="#262626"/><rect x="1299" y="42" width="1" height="8" fill="#262626"/><rect x="1299" y="26" width="1" height="15" fill="#c0c0c0"/><rect x="1355" y="2" width="1" height="8" fill="#262626"/><rect x="1355" y="42" width="1" height="8" fill="#262626"/><rect x="1355" y="26" width="1" height="15" fill="#c0c0c0"/><rect x="1412" y="2" width="1" height="8" fill="#262626"/><rect x="1412" y="42" width="1" height="8" fill="#262626"/><rect x="1412" y="26" width="1" height="15" fill="#c0c0c0"/><rect x="1468" y="2" width="1" height="8" fill="#262626"/><rect x="1468" y="42" width="1" height="8" fill="#262626"/><rect x="1468" y="26" width="1" height="15" fill="#c0c0c0"/><rect x="1525" y="2" width="1" height="8" fill="#262626"/><rect x="1525" y="42" width="1" height="8" fill="#262626"/><rect x="1525" y="26" width="1" height="15" fill="#c0c0c0"/><rect x="1582" y="2" width="1" height="8" fill="#262626"/><rect x="1582" y="42" width="1" height="8" fill="#262626"/><rect x="1582" y="26" width="1" height="15" fill="#c0c0c0"/></svg>
<div class="t" style="left:31px;top:899.5px;line-height:15px;font-size:11.5px;color:#ffffff;font-weight:400;font-family:'Liberation Sans',sans-serif;">1001</div>
<div style="left:1638px;top:890px;width:50px;height:20px;background:#2b2b2b;border-radius:3px"></div>
<div class="t" style="left:1643px;top:892.5px;line-height:15px;font-size:11.5px;color:#e6e6e6;font-weight:400;font-family:'Liberation Sans',sans-serif;">1001</div>
<svg style="position:absolute;left:1698px;top:892px;" width="17" height="15" viewBox="0 0 17 15"><rect x="0.5" y="2" width="2" height="11" fill="#c8c8c8"/><path d="M3 7.5 L9 2.5 V12.5Z M9 7.5 L15.5 2.5 V12.5Z" fill="#c8c8c8"/></svg>
<svg style="position:absolute;left:1728px;top:892px;" width="13" height="15" viewBox="0 0 13 15"><rect x="0.5" y="2" width="2" height="11" fill="#c8c8c8"/><path d="M3 7.5 L11.5 1.5 V13.5Z" fill="#c8c8c8"/></svg>
<svg style="position:absolute;left:1755px;top:890px;" width="15" height="19" viewBox="0 0 15 19"><rect x="1" y="1" width="2" height="17" fill="#e8803a"/><path d="M4 9.5 L13.5 3 V16Z" fill="#c8c8c8"/></svg>
<svg style="position:absolute;left:1784px;top:892px;" width="13" height="15" viewBox="0 0 13 15"><path d="M0.5 7.5 L12 0.5 V14.5Z" fill="#c8c8c8"/></svg>
<svg style="position:absolute;left:1813px;top:892px;" width="13" height="15" viewBox="0 0 13 15"><path d="M12.5 7.5 L1 0.5 V14.5Z" fill="#c8c8c8"/></svg>
<svg style="position:absolute;left:1840px;top:890px;" width="15" height="19" viewBox="0 0 15 19"><rect x="11.5" y="1" width="2" height="17" fill="#e8803a"/><path d="M11 9.5 L1.5 3 V16Z" fill="#c8c8c8"/></svg>
<svg style="position:absolute;left:1868px;top:892px;" width="13" height="15" viewBox="0 0 13 15"><rect x="10" y="2" width="2" height="11" fill="#c8c8c8"/><path d="M9.5 7.5 L1 1.5 V13.5Z" fill="#c8c8c8"/></svg>
<svg style="position:absolute;left:1895px;top:892px;" width="17" height="15" viewBox="0 0 17 15"><rect x="14" y="2" width="2" height="11" fill="#c8c8c8"/><path d="M13.5 7.5 L7 2.5 V12.5Z M7 7.5 L0.5 2.5 V12.5Z" fill="#c8c8c8"/></svg>
<div style="left:0px;top:925px;width:1920px;height:36px;background:#444444;"></div>
<div style="left:0px;top:925px;width:1920px;height:1px;background:#3c3c3c;"></div>
<svg style="position:absolute;left:3px;top:930px;" width="5" height="28" viewBox="0 0 5 28"><rect x="0" y="0" width="1" height="1" fill="#6a6a6a"/><rect x="0" y="3" width="1" height="1" fill="#6a6a6a"/><rect x="0" y="6" width="1" height="1" fill="#6a6a6a"/><rect x="0" y="9" width="1" height="1" fill="#6a6a6a"/><rect x="0" y="12" width="1" height="1" fill="#6a6a6a"/><rect x="0" y="15" width="1" height="1" fill="#6a6a6a"/><rect x="0" y="18" width="1" height="1" fill="#6a6a6a"/><rect x="0" y="21" width="1" height="1" fill="#6a6a6a"/><rect x="0" y="24" width="1" height="1" fill="#6a6a6a"/><rect x="0" y="27" width="1" height="1" fill="#6a6a6a"/><rect x="3" y="0" width="1" height="1" fill="#6a6a6a"/><rect x="3" y="3" width="1" height="1" fill="#6a6a6a"/><rect x="3" y="6" width="1" height="1" fill="#6a6a6a"/><rect x="3" y="9" width="1" height="1" fill="#6a6a6a"/><rect x="3" y="12" width="1" height="1" fill="#6a6a6a"/><rect x="3" y="15" width="1" height="1" fill="#6a6a6a"/><rect x="3" y="18" width="1" height="1" fill="#6a6a6a"/><rect x="3" y="21" width="1" height="1" fill="#6a6a6a"/><rect x="3" y="24" width="1" height="1" fill="#6a6a6a"/><rect x="3" y="27" width="1" height="1" fill="#6a6a6a"/></svg>
<div style="left:17px;top:934px;width:50px;height:19px;background:#2b2b2b;border-radius:3px"></div>
<div class="t" style="left:22px;top:936.5px;line-height:15px;font-size:11.5px;color:#d6d6d6;font-weight:400;font-family:'Liberation Sans',sans-serif;">1001</div>
<div style="left:77px;top:935px;width:1088px;height:18px;background:#4a4a4a;border:1px solid #2e2e2e;box-sizing:border-box;border-radius:2px"></div>
<div style="left:78px;top:936px;width:8px;height:16px;background:#a6a6a6;"></div>
<div style="left:1156px;top:936px;width:8px;height:16px;background:#a6a6a6;"></div>
<div class="t" style="left:94.5px;top:936.5px;line-height:15px;font-size:11.5px;color:#d6d6d6;font-weight:400;font-family:'Liberation Sans',sans-serif;">1001</div>
<div class="t" style="left:1120px;top:936.5px;line-height:15px;font-size:11.5px;color:#d6d6d6;font-weight:400;font-family:'Liberation Sans',sans-serif;">1141</div>
<svg style="position:absolute;left:619px;top:938px;" width="4" height="12" viewBox="0 0 4 12"><rect x="0" y="0" width="1" height="1" fill="#999"/><rect x="0" y="3" width="1" height="1" fill="#999"/><rect x="0" y="6" width="1" height="1" fill="#999"/><rect x="0" y="9" width="1" height="1" fill="#999"/><rect x="3" y="0" width="1" height="1" fill="#999"/><rect x="3" y="3" width="1" height="1" fill="#999"/><rect x="3" y="6" width="1" height="1" fill="#999"/><rect x="3" y="9" width="1" height="1" fill="#999"/></svg>
<div style="left:1175px;top:934px;width:50px;height:19px;background:#2b2b2b;border-radius:3px"></div>
<div class="t" style="left:1180px;top:936.5px;line-height:15px;font-size:11.5px;color:#e0e0e0;font-weight:400;font-family:'Liberation Sans',sans-serif;">1141</div>
<svg style="position:absolute;left:1244px;top:933px;" width="5" height="20" viewBox="0 0 5 20"><rect x="2" y="0" width="1" height="20" fill="#8a8a8a"/><rect x="1" y="6" width="3" height="8" rx="1" fill="#8a8a8a"/></svg>
<svg style="position:absolute;left:1272px;top:932px;" width="16" height="21" viewBox="0 0 16 21"><path d="M1 3 H9 V19 L5 15 L1 19Z" fill="#e8803a"/><path d="M11.5 1 V8 M8 4.5 H15" stroke="#e8e8e8" stroke-width="2"/></svg>
<svg style="position:absolute;left:1308px;top:933px;" width="5" height="20" viewBox="0 0 5 20"><rect x="2" y="0" width="1" height="20" fill="#8a8a8a"/><rect x="1" y="6" width="3" height="8" rx="1" fill="#8a8a8a"/></svg>
<svg style="position:absolute;left:1335px;top:940px;" width="11" height="7" viewBox="0 0 11 7"><path d="M0.5 0.5 H10.5 L5.5 6Z" fill="none" stroke="#9a9a9a"/></svg>
<div style="left:1352px;top:934px;width:101px;height:19px;background:#444444;border:1px solid #3a3a3a;box-sizing:border-box;border-radius:3px"></div>
<div class="t" style="left:1358px;top:936.0px;line-height:15px;font-size:11.5px;color:#d0d0d0;font-weight:400;font-family:'Liberation Sans',sans-serif;">No Character Set</div>
<svg style="position:absolute;left:1467px;top:940px;" width="11" height="7" viewBox="0 0 11 7"><path d="M0.5 0.5 H10.5 L5.5 6Z" fill="none" stroke="#9a9a9a"/></svg>
<div style="left:1484px;top:934px;width:101px;height:19px;background:#444444;border:1px solid #3a3a3a;box-sizing:border-box;border-radius:3px"></div>
<div class="t" style="left:1490px;top:936.0px;line-height:15px;font-size:11.5px;color:#d0d0d0;font-weight:400;font-family:'Liberation Sans',sans-serif;">No Anim Layer</div>
<svg style="position:absolute;left:1606px;top:933px;" width="5" height="20" viewBox="0 0 5 20"><rect x="2" y="0" width="1" height="20" fill="#8a8a8a"/><rect x="1" y="6" width="3" height="8" rx="1" fill="#8a8a8a"/></svg>
<div style="left:1631px;top:933px;width:95px;height:20px;background:#585858;border-radius:2px"></div>
<div style="left:1706px;top:933px;width:1px;height:20px;background:#4a4a4a;"></div>
<div class="t" style="left:1634px;top:936.0px;line-height:15px;font-size:11.5px;color:#d0d0d0;font-weight:400;font-family:'Liberation Sans',sans-serif;">24 fps</div>
<svg style="position:absolute;left:1711px;top:940px;" width="11" height="7" viewBox="0 0 11 7"><path d="M0 0 H11 L5.5 6Z" fill="#d8d8d8"/></svg>
<svg style="position:absolute;left:1742px;top:936px;" width="17" height="15" viewBox="0 0 17 15"><path d="M3 9 V6 Q3 3 6 3 H13" fill="none" stroke="#c8c8c8" stroke-width="2"/><path d="M12 0 L16 3 L12 6Z" fill="#c8c8c8"/><path d="M14 6 V9 Q14 12 11 12 H4" fill="none" stroke="#c8c8c8" stroke-width="2"/><path d="M5 9 L1 12 L5 15Z" fill="#c8c8c8"/></svg>
<svg style="position:absolute;left:1772px;top:934px;" width="19" height="19" viewBox="0 0 19 19"><rect x="1" y="6" width="16" height="11" fill="none" stroke="#e8803a" stroke-width="1.5"/><path d="M1 8.5 H17 M1 14.5 H17" stroke="#e8803a" stroke-width="1"/><rect x="4" y="10" width="3" height="3" fill="#e8803a"/><rect x="8.5" y="10" width="3" height="3" fill="#e8803a"/><path d="M12 0 L18 4 L12 8Z" fill="#c8c8c8"/></svg>
<svg style="position:absolute;left:1811px;top:933px;" width="5" height="20" viewBox="0 0 5 20"><rect x="2" y="0" width="1" height="20" fill="#8a8a8a"/><rect x="1" y="6" width="3" height="8" rx="1" fill="#8a8a8a"/></svg>
<svg style="position:absolute;left:1837px;top:935px;" width="18" height="16" viewBox="0 0 18 16"><path d="M1 5 H5 L10 1 V15 L5 11 H1Z" fill="#c8c8c8"/><path d="M12 5 Q14 8 12 11 M14.5 3 Q18 8 14.5 13" fill="none" stroke="#c8c8c8" stroke-width="1.3"/></svg>
<svg style="position:absolute;left:1866px;top:935px;" width="17" height="17" viewBox="0 0 17 17"><path d="M3 4 A7 7 0 1 1 2 11" fill="none" stroke="#c8c8c8" stroke-width="1.4"/><path d="M0 2 L5 2 L3 6Z" fill="#c8c8c8"/><path d="M8.5 4 V10" stroke="#e8803a" stroke-width="2"/><path d="M6 8 H11" stroke="#e8803a" stroke-width="1.2"/></svg>
<svg style="position:absolute;left:1894px;top:932px;" width="18" height="20" viewBox="0 0 18 20"><circle cx="5" cy="5" r="3" fill="none" stroke="#c8c8c8" stroke-width="1.6"/><circle cx="12" cy="7" r="2" fill="#e8803a"/><path d="M11 9 L8 14 L5 14 M9 12 L12 15 L11 19 M10 10 L14 12 L17 11" fill="none" stroke="#e8803a" stroke-width="2"/></svg>
<div style="left:0px;top:961px;width:1920px;height:39px;background:#444444;"></div>
<div style="left:0px;top:961px;width:1920px;height:1px;background:#333;"></div>
<svg style="position:absolute;left:3px;top:966px;" width="5" height="32" viewBox="0 0 5 32"><rect x="0" y="0" width="1" height="1" fill="#6a6a6a"/><rect x="0" y="3" width="1" height="1" fill="#6a6a6a"/><rect x="0" y="6" width="1" height="1" fill="#6a6a6a"/><rect x="0" y="9" width="1" height="1" fill="#6a6a6a"/><rect x="0" y="12" width="1" height="1" fill="#6a6a6a"/><rect x="0" y="15" width="1" height="1" fill="#6a6a6a"/><rect x="0" y="18" width="1" height="1" fill="#6a6a6a"/><rect x="0" y="21" width="1" height="1" fill="#6a6a6a"/><rect x="0" y="24" width="1" height="1" fill="#6a6a6a"/><rect x="0" y="27" width="1" height="1" fill="#6a6a6a"/><rect x="0" y="30" width="1" height="1" fill="#6a6a6a"/><rect x="3" y="0" width="1" height="1" fill="#6a6a6a"/><rect x="3" y="3" width="1" height="1" fill="#6a6a6a"/><rect x="3" y="6" width="1" height="1" fill="#6a6a6a"/><rect x="3" y="9" width="1" height="1" fill="#6a6a6a"/><rect x="3" y="12" width="1" height="1" fill="#6a6a6a"/><rect x="3" y="15" width="1" height="1" fill="#6a6a6a"/><rect x="3" y="18" width="1" height="1" fill="#6a6a6a"/><rect x="3" y="21" width="1" height="1" fill="#6a6a6a"/><rect x="3" y="24" width="1" height="1" fill="#6a6a6a"/><rect x="3" y="27" width="1" height="1" fill="#6a6a6a"/><rect x="3" y="30" width="1" height="1" fill="#6a6a6a"/></svg>
<svg style="position:absolute;left:16px;top:974px;" width="17" height="17" viewBox="0 0 17 17"><circle cx="8.5" cy="8.5" r="8" fill="#7cbf3a"/><text x="8.5" y="13.5" font-family="Liberation Sans" font-weight="700" font-size="12" fill="#2a3a1a" text-anchor="middle">?</text></svg>
<div class="t" style="left:40px;top:976.0px;line-height:13px;font-size:9.8px;color:#d6d6d6;font-weight:400;font-family:'Liberation Sans',sans-serif;">Saves the current file to a new version</div>
<div style="left:815px;top:962px;width:2px;height:38px;background:#383838;"></div>
<svg style="position:absolute;left:821px;top:966px;" width="4" height="32" viewBox="0 0 4 32"><rect x="0" y="0" width="1" height="1" fill="#8a8a8a"/><rect x="0" y="3" width="1" height="1" fill="#8a8a8a"/><rect x="0" y="6" width="1" height="1" fill="#8a8a8a"/><rect x="0" y="9" width="1" height="1" fill="#8a8a8a"/><rect x="0" y="12" width="1" height="1" fill="#8a8a8a"/><rect x="0" y="15" width="1" height="1" fill="#8a8a8a"/><rect x="0" y="18" width="1" height="1" fill="#8a8a8a"/><rect x="0" y="21" width="1" height="1" fill="#8a8a8a"/><rect x="0" y="24" width="1" height="1" fill="#8a8a8a"/><rect x="0" y="27" width="1" height="1" fill="#8a8a8a"/><rect x="0" y="30" width="1" height="1" fill="#8a8a8a"/><rect x="3" y="0" width="1" height="1" fill="#8a8a8a"/><rect x="3" y="3" width="1" height="1" fill="#8a8a8a"/><rect x="3" y="6" width="1" height="1" fill="#8a8a8a"/><rect x="3" y="9" width="1" height="1" fill="#8a8a8a"/><rect x="3" y="12" width="1" height="1" fill="#8a8a8a"/><rect x="3" y="15" width="1" height="1" fill="#8a8a8a"/><rect x="3" y="18" width="1" height="1" fill="#8a8a8a"/><rect x="3" y="21" width="1" height="1" fill="#8a8a8a"/><rect x="3" y="24" width="1" height="1" fill="#8a8a8a"/><rect x="3" y="27" width="1" height="1" fill="#8a8a8a"/><rect x="3" y="30" width="1" height="1" fill="#8a8a8a"/></svg>
<div class="t" style="left:833px;top:974.5px;line-height:15px;font-size:11.5px;color:#e6e6e6;font-weight:400;font-family:'Liberation Sans',sans-serif;">MEL</div>
<div style="left:862px;top:972px;width:398px;height:20px;background:#2b2b2b;border-radius:3px"></div>
<svg style="position:absolute;left:1262px;top:976px;" width="1" height="12" viewBox="0 0 1 12"><rect x="0" y="0" width="1" height="1" fill="#8a8a8a"/><rect x="0" y="3" width="1" height="1" fill="#8a8a8a"/><rect x="0" y="6" width="1" height="1" fill="#8a8a8a"/><rect x="0" y="9" width="1" height="1" fill="#8a8a8a"/></svg>
<div style="left:1265px;top:972px;width:618px;height:20px;background:#2b2b2b;border-radius:3px"></div>
<svg style="position:absolute;left:1893px;top:972px;" width="19" height="20" viewBox="0 0 19 20"><rect x="0" y="0" width="19" height="3.5" fill="#cfcfcf"/><path d="M2 1.75 H3 M4.5 1.75 H5.5 M7 1.75 H8" stroke="#333" stroke-width="1"/><rect x="0" y="4.5" width="19" height="15" fill="#cfcfcf"/><text x="9.5" y="16.5" font-family="Liberation Sans" font-weight="700" font-size="10" fill="#333" text-anchor="middle">{:}</text></svg>
<div style="left:0px;top:1000px;width:1920px;height:73px;background:#1f1f1f;"></div>
<div class="t" style="left:36px;top:1015.5px;line-height:40px;font-size:32px;color:#ffffff;font-weight:700;font-family:'Liberation Sans',sans-serif;">Tool Shelf</div>
<div style="left:225px;top:1007px;width:60px;height:60px;background:#3a3a3a;border-radius:6px"></div>
<svg style="position:absolute;left:236px;top:1017px;" width="39" height="42" viewBox="0 0 39 42"><g transform="scale(1.27)"><path d="M0 4 L5 0 H27 Q29 0 29 2 V26 L5 26 L0 28Z" fill="#8fd3f0"/><path d="M5 0 H27 Q29 0 29 2 V25 H5Z" fill="#36a3d3"/><path d="M5 20 H29 V31 Q29 32 28 32 H5Z" fill="#2b7ca3"/><text x="17" y="17" font-family="Liberation Sans" font-weight="700" font-size="15" fill="#fff" text-anchor="middle">M</text><text x="17" y="29.5" font-family="Liberation Sans" font-weight="700" font-size="6.5" fill="#e8f4fa" text-anchor="middle">AYA</text></g></svg>
<div style="left:242px;top:1064px;width:26px;height:3px;background:#8a8a8a;"></div>
<svg style="position:absolute;left:1710px;top:1008px;" width="180" height="60" viewBox="0 0 180 60"><defs><linearGradient id="pg" x1="0" y1="0" x2="1" y2="1"><stop offset="0" stop-color="#ffa21a"/><stop offset="0.3" stop-color="#f22a3a"/><stop offset="0.62" stop-color="#c233e6"/><stop offset="1" stop-color="#7a3cf2"/></linearGradient><linearGradient id="pg2" x1="0" y1="0" x2="0.3" y2="1"><stop offset="0" stop-color="#4a62f0"/><stop offset="0.5" stop-color="#2a9ae0"/><stop offset="1" stop-color="#20e6a0"/></linearGradient></defs><path d="M8 7 L38.4 24.4 L8 41.7Z M14.5 19.2 V29.9 L23.9 24.6Z" fill="url(#pg)" fill-rule="evenodd"/><path d="M8.9 43.1 L24.8 35.6 L24.8 53.9Z" fill="url(#pg2)"/><g fill="none" stroke="#ffffff" stroke-width="3.3" stroke-linejoin="miter"><path d="M49.5 40.8 V18.9 H57 A6.05 6.05 0 0 1 57 31 H49.5"/><path d="M77.1 40.8 V18.9 H84.6 A6.05 6.05 0 0 1 84.6 31 H77.1 M84 31 L92.5 40.8"/><path d="M106.9 17.3 V40.8"/><path d="M135 20.5 Q131.5 18.9 128 18.9 Q122 18.9 122 23.5 Q122 27.5 128 29 Q134.8 30.6 134.8 35 Q134.8 39.2 128 39.2 Q123.5 39.2 120.8 37"/><path d="M147.9 40.8 L155 18.9 L159.5 35 L164.5 18.9 L171.4 40.8" stroke-linejoin="bevel"/></g><text x="104.8" y="53.2" font-family="Liberation Sans" font-weight="700" font-size="7" fill="#e8e8e8" textLength="68.5" lengthAdjust="spacing">PIPELINE</text></svg>
<div style="left:0px;top:1073px;width:1920px;height:7px;background:linear-gradient(90deg,#ff9a1a 0%,#ff3a2a 20%,#e8208a 40%,#a030f0 55%,#4a50f0 72%,#1a9ae8 85%,#10e0a0 100%);"></div>
<div style="left:60px;top:137px;width:203px;height:19px;background:#ffffe1;border:1px solid #1a1a1a;box-sizing:border-box"></div>
<div class="t" style="left:63px;top:139.0px;line-height:15px;font-size:11.6px;color:#111111;font-weight:400;font-family:'Liberation Sans',sans-serif;">Saves the current file to a new version</div>
<svg style="position:absolute;left:57px;top:120px;" width="30" height="42" viewBox="0 0 30 42"><path d="M3 3 L3 35 L10.5 28 L15.5 39.5 L21 37.5 L16 26.5 L26 25.5Z" fill="#ffffff" stroke="#000" stroke-width="2" stroke-linejoin="round"/></svg>
</body></html>
